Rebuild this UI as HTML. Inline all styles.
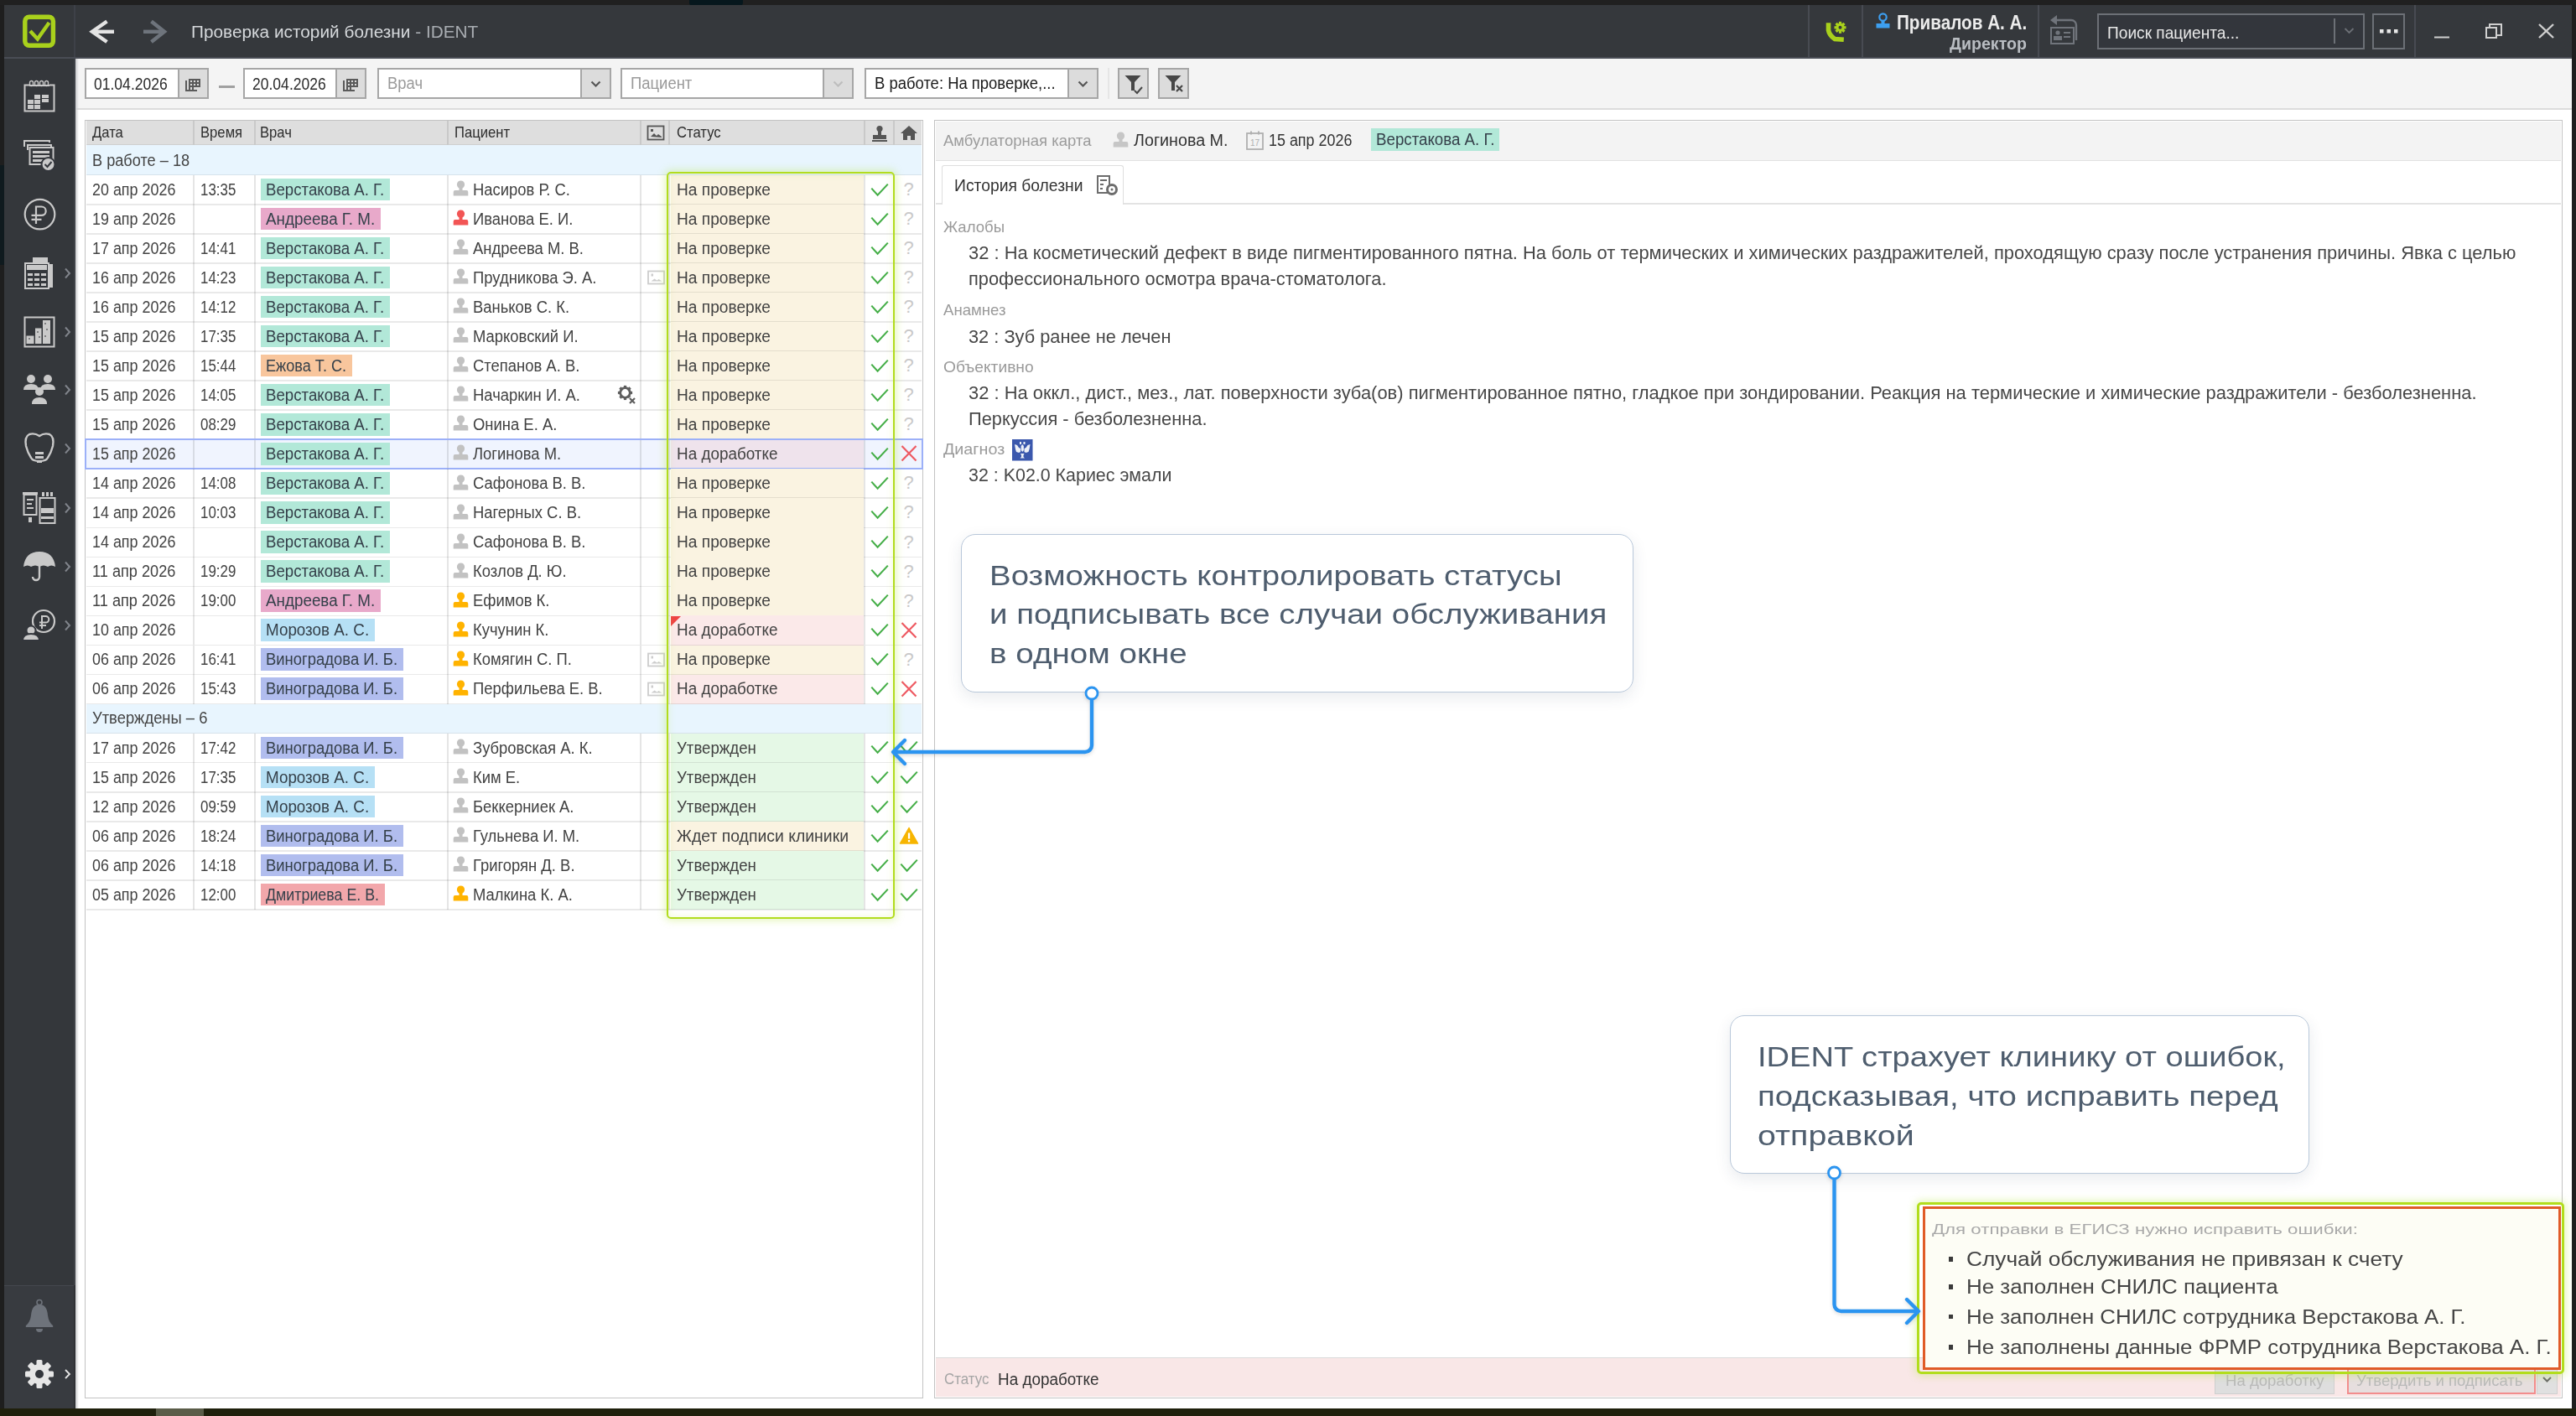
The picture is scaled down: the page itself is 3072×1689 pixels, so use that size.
<!DOCTYPE html>
<html><head><meta charset="utf-8"><style>
*{margin:0;padding:0;box-sizing:border-box}
html,body{width:3072px;height:1689px;overflow:hidden;background:#1d1d1d;font-family:"Liberation Sans", sans-serif}
div{position:absolute}
svg{position:absolute;overflow:visible}
</style></head><body>
<div style="left:0px;top:0px;width:3072px;height:6px;background:#202020"></div><div style="left:822px;top:0px;width:64px;height:6.5px;background:#06171d;border-radius:0 0 4px 4px"></div><div style="left:0px;top:6px;width:5px;height:1683px;background:#1e1e1e"></div><div style="left:0px;top:197px;width:5px;height:119px;background:#0f1a1e"></div><div style="left:3067px;top:6px;width:5px;height:1683px;background:#1e1e1e"></div><div style="left:0px;top:1680px;width:3072px;height:9px;background:#1f200c"></div><div style="left:186px;top:1680px;width:57px;height:9px;background:#5a5c48"></div><div style="left:5px;top:6px;width:3062px;height:62px;background:#35383c"></div><div style="left:5px;top:68px;width:3062px;height:2px;background:#494d55"></div><div style="left:88px;top:6px;width:2px;height:62px;background:#3e4148"></div><svg style="left:0;top:0" width="100" height="70"><rect x="29.8" y="20.2" width="33.6" height="34" rx="5" ry="5" fill="none" stroke="#a9d11c" stroke-width="5.4"/><polyline points="36,37 44.8,46.5 58.6,27" fill="none" stroke="#a9d11c" stroke-width="4.4" stroke-linejoin="miter"/></svg><svg style="left:0;top:0" width="220" height="70"><polyline points="127.5,25.5 110,37.8 127.5,50" fill="none" stroke="#e4e4e4" stroke-width="4.4"/><line x1="110.5" y1="37.8" x2="136" y2="37.8" stroke="#e4e4e4" stroke-width="4.4"/><polyline points="180.5,25.5 196,37.8 180.5,50" fill="none" stroke="#6e747c" stroke-width="4.4"/><line x1="171" y1="37.8" x2="195.5" y2="37.8" stroke="#6e747c" stroke-width="4.4"/></svg><div class="tt" style="left:227.975px;top:24.67px;height:26.65px;line-height:26.65px;font-size:20.5px;color:#d6d9dc;white-space:nowrap;transform:scaleX(1.0150);transform-origin:0 50%;">Проверка историй болезни <span style="color:#a9adb2">- IDENT</span></div><div style="left:2156px;top:6px;width:2px;height:62px;background:#484b52"></div><div style="left:2220px;top:6px;width:2px;height:62px;background:#484b52"></div><div style="left:2430px;top:6px;width:2px;height:62px;background:#484b52"></div><div style="left:2879px;top:6px;width:2px;height:62px;background:#484b52"></div><svg style="left:2170px;top:20px" width="40" height="36"><path d="M10.5,10 V16 Q11.5,22 18,26.5 L26,27" fill="none" stroke="#a9d11c" stroke-width="5.6" stroke-linecap="square"/><g transform="translate(24.5,12.8)" fill="#a9d11c"><rect x="-1.6" y="-7" width="3.2" height="4" transform="rotate(0)"/><rect x="-1.6" y="-7" width="3.2" height="4" transform="rotate(45)"/><rect x="-1.6" y="-7" width="3.2" height="4" transform="rotate(90)"/><rect x="-1.6" y="-7" width="3.2" height="4" transform="rotate(135)"/><rect x="-1.6" y="-7" width="3.2" height="4" transform="rotate(180)"/><rect x="-1.6" y="-7" width="3.2" height="4" transform="rotate(225)"/><rect x="-1.6" y="-7" width="3.2" height="4" transform="rotate(270)"/><rect x="-1.6" y="-7" width="3.2" height="4" transform="rotate(315)"/><circle r="5"/></g><circle cx="24.5" cy="12.8" r="2" fill="#35383c"/></svg><svg style="left:2234px;top:14px" width="24" height="24"><circle cx="11.5" cy="6.5" r="4.2" fill="none" stroke="#3d9ff0" stroke-width="2.2"/><path d="M9.5,10 h4 v4 h6 v5.5 h-16 v-5.5 h6 Z" fill="#3d9ff0"/></svg><div style="left:2261.8px;top:10.70px;height:31.20px;line-height:31.20px;font-size:24px;color:#ececec;white-space:nowrap;font-weight:700;transform:scaleX(0.8621);transform-origin:0 50%;">Привалов А. А.</div><div style="left:2324.95px;top:37.75px;height:27.30px;line-height:27.30px;font-size:21px;color:#b9bdc2;white-space:nowrap;font-weight:700;transform:scaleX(0.9324);transform-origin:0 50%;">Директор</div><svg style="left:2440px;top:14px" width="44" height="44"><rect x="6" y="19" width="27" height="19" fill="none" stroke="#70747b" stroke-width="2"/><circle cx="14" cy="25" r="2.6" fill="#70747b"/><rect x="9" y="29" width="10" height="5" fill="#70747b"/><rect x="21" y="24" width="8" height="2" fill="#70747b"/><rect x="21" y="29" width="8" height="2" fill="#70747b"/><path d="M12,10 h18 a6,6 0 0 1 6,6 v18" fill="none" stroke="#70747b" stroke-width="2.4"/><path d="M5,10 l8,-6 v12 z" fill="#70747b"/></svg><div style="left:2501px;top:15.5px;width:319px;height:43.0px;border:2px solid #6c7076;background:#33363c"></div><div style="left:2783px;top:22px;width:2px;height:30px;background:#6c7076"></div><svg style="left:2790px;top:30px" width="24" height="16"><polyline points="6.5,4 11.5,9 16.5,4" fill="none" stroke="#6c7076" stroke-width="1.8"/></svg><div style="left:2513.45px;top:24.55px;height:27.30px;line-height:27.30px;font-size:21px;color:#e8e8e8;white-space:nowrap;transform:scaleX(0.9113);transform-origin:0 50%;">Поиск пациента...</div><div style="left:2829px;top:15.5px;width:39px;height:43.0px;border:2px solid #6c7076"></div><svg style="left:2829px;top:15px" width="40" height="44"><rect x="9" y="20" width="4.5" height="4.5" fill="#e8e8e8"/><rect x="17.5" y="20" width="4.5" height="4.5" fill="#e8e8e8"/><rect x="26" y="20" width="4.5" height="4.5" fill="#e8e8e8"/></svg><svg style="left:2890px;top:20px" width="170" height="36"><line x1="13" y1="24.5" x2="31" y2="24.5" stroke="#d0d0d0" stroke-width="2"/><rect x="75" y="13" width="12" height="12" fill="none" stroke="#d0d0d0" stroke-width="2"/><path d="M79,13 v-4 h14 v13 h-6" fill="none" stroke="#d0d0d0" stroke-width="2"/><line x1="138" y1="9" x2="155" y2="25" stroke="#d0d0d0" stroke-width="2.4"/><line x1="155" y1="9" x2="138" y2="25" stroke="#d0d0d0" stroke-width="2.4"/></svg><div style="left:5px;top:70px;width:85px;height:1610px;background:#34373b"></div><div style="left:5px;top:1533px;width:85px;height:147px;background:#383b40;border-top:1.5px solid #45484e"></div><div style="left:88px;top:70px;width:2px;height:1463px;background:#3f4247"></div><div style="left:88px;top:1533px;width:2px;height:147px;background:#2f3135"></div><svg style="left:27px;top:95px" width="40" height="40"><path d="M8,6.5 H2.5 V37.5 H37.5 V6.5 H32" fill="none" stroke="#c9c9c9" stroke-width="2"/><g fill="none" stroke="#c9c9c9" stroke-width="1.4"><rect x="8.5" y="1.5" width="4" height="6" rx="2"/><rect x="14.5" y="1.5" width="4" height="6" rx="2"/><rect x="20.5" y="1.5" width="4" height="6" rx="2"/><rect x="26.5" y="1.5" width="4" height="6" rx="2"/></g><rect x="8" y="6" width="24" height="2" fill="#c9c9c9"/><g fill="#c9c9c9"><rect x="6" y="24" width="7" height="5"/><rect x="6" y="30" width="7" height="5"/><rect x="14" y="18" width="7" height="5"/><rect x="14" y="24" width="7" height="5"/><rect x="14" y="30" width="7" height="5"/><rect x="23" y="18" width="8" height="4"/><rect x="23" y="23" width="8" height="4"/></g></svg><svg style="left:27px;top:165px" width="40" height="40"><path d="M2,10 v-7 h30 v2" fill="none" stroke="#c9c9c9" stroke-width="2"/><path d="M6,14 v-6 h28 v2" fill="none" stroke="#c9c9c9" stroke-width="2"/><rect x="8.5" y="11" width="28" height="20" fill="none" stroke="#c9c9c9" stroke-width="2"/><g fill="#c9c9c9"><rect x="12" y="15" width="20" height="3"/><rect x="12" y="20" width="20" height="3"/><rect x="12" y="25" width="12" height="3"/></g><circle cx="30.5" cy="31" r="8" fill="#c9c9c9" stroke="#33363c" stroke-width="2"/><polyline points="26.5,31 29.5,34 34.5,28" fill="none" stroke="#33363c" stroke-width="2"/></svg><svg style="left:27px;top:236px" width="40" height="40"><circle cx="20.5" cy="19.6" r="17.8" fill="none" stroke="#c9c9c9" stroke-width="2.2"/><path d="M16,31 v-20.5 h6.5 a5.2,5.2 0 0 1 0,10.4 h-12 M10.5,25.8 h12" fill="none" stroke="#c9c9c9" stroke-width="2.2"/></svg><svg style="left:27px;top:306px" width="40" height="40"><rect x="12" y="1" width="18" height="6" fill="#c9c9c9"/><rect x="3" y="8" width="28" height="30" fill="none" stroke="#c9c9c9" stroke-width="2"/><rect x="5" y="10" width="24" height="6" fill="#c9c9c9"/><g fill="#c9c9c9"><rect x="6" y="20" width="6" height="3"/><rect x="14" y="20" width="6" height="3"/><rect x="22" y="20" width="6" height="3"/><rect x="6" y="26" width="6" height="3"/><rect x="14" y="26" width="6" height="3"/><rect x="22" y="26" width="6" height="3"/><rect x="6" y="32" width="6" height="3"/><rect x="14" y="32" width="6" height="3"/><rect x="22" y="32" width="6" height="3"/></g><rect x="31" y="9" width="5" height="28" fill="#c9c9c9"/></svg><svg style="left:27px;top:376px" width="40" height="40"><rect x="2.5" y="2.5" width="35" height="35" fill="none" stroke="#c9c9c9" stroke-width="2"/><g fill="#c9c9c9"><rect x="4.5" y="24.5" width="9" height="9.5"/><rect x="15" y="15.5" width="7.5" height="18.5"/><rect x="24" y="6" width="9" height="28"/></g><g fill="#35383c" opacity="0.5"><rect x="7" y="27" width="2" height="2"/><rect x="17" y="19" width="2" height="2"/><rect x="19" y="25" width="2" height="2"/><rect x="26" y="9" width="2" height="2"/><rect x="28" y="16" width="2" height="2"/><rect x="26" y="24" width="2" height="2"/></g></svg><svg style="left:27px;top:445px" width="40" height="40"><g fill="#c9c9c9"><circle cx="10" cy="7" r="5"/><path d="M1,20 q0,-7 9,-7 q9,0 9,7 z"/><circle cx="30" cy="7" r="5"/><path d="M21,20 q0,-7 9,-7 q9,0 9,7 z"/><circle cx="20" cy="22" r="5"/><path d="M11,37 q0,-8 9,-8 q9,0 9,8 z"/></g></svg><svg style="left:27px;top:515px" width="40" height="40"><path d="M8,3 q6,-2 12,2 q6,-4 12,-2 q6,3 4,14 q-2,8 -6,14 q-2,4 -10,4 q-8,0 -10,-4 q-4,-6 -6,-14 q-2,-11 4,-14 z" fill="none" stroke="#c9c9c9" stroke-width="2.4"/><g fill="#c9c9c9"><rect x="15" y="24" width="10" height="3"/><rect x="15" y="29" width="10" height="3"/><rect x="17" y="34" width="6" height="3"/></g></svg><svg style="left:27px;top:586px" width="40" height="40"><rect x="1.5" y="4" width="15" height="24" fill="none" stroke="#c9c9c9" stroke-width="2"/><rect x="0" y="1" width="18" height="3" fill="#c9c9c9"/><g fill="#c9c9c9"><rect x="5" y="9" width="8" height="2"/><rect x="5" y="14" width="6" height="2"/><rect x="5" y="19" width="8" height="2"/><rect x="7" y="31" width="4" height="6"/></g><rect x="20.5" y="8" width="18" height="30" fill="none" stroke="#c9c9c9" stroke-width="2"/><g fill="#c9c9c9"><rect x="23" y="1" width="3" height="5"/><rect x="28" y="1" width="3" height="5"/><rect x="33" y="1" width="3" height="5"/><rect x="22" y="20" width="15" height="6"/><rect x="22" y="30" width="15" height="3"/></g></svg><svg style="left:27px;top:656px" width="40" height="40"><path d="M1,20 q2,-18 19,-18 q17,0 19,18 q-5,-3 -9,0 q-5,-3 -10,0 q-5,-3 -10,0 q-4,-3 -9,0 z" fill="#c9c9c9"/><path d="M20,18 v14 a4,4 0 0 1 -8,0" fill="none" stroke="#c9c9c9" stroke-width="2.4"/></svg><svg style="left:27px;top:726px" width="40" height="40"><circle cx="25" cy="15" r="13" fill="none" stroke="#c9c9c9" stroke-width="2.2"/><path d="M23,24 v-15 h4.5 a3.8,3.8 0 0 1 0,7.6 h-7.5 M20,20 h8" fill="none" stroke="#c9c9c9" stroke-width="2"/><g fill="#c9c9c9" stroke="#33363c" stroke-width="2"><circle cx="10" cy="26" r="5.5"/><path d="M0,38 q0,-8 10,-8 q10,0 10,8 z"/></g></svg><svg style="left:74px;top:318px" width="14" height="16"><polyline points="4,2.5 9,8 4,13.5" fill="none" stroke="#80848b" stroke-width="2"/></svg><svg style="left:74px;top:388px" width="14" height="16"><polyline points="4,2.5 9,8 4,13.5" fill="none" stroke="#80848b" stroke-width="2"/></svg><svg style="left:74px;top:457px" width="14" height="16"><polyline points="4,2.5 9,8 4,13.5" fill="none" stroke="#80848b" stroke-width="2"/></svg><svg style="left:74px;top:527px" width="14" height="16"><polyline points="4,2.5 9,8 4,13.5" fill="none" stroke="#80848b" stroke-width="2"/></svg><svg style="left:74px;top:598px" width="14" height="16"><polyline points="4,2.5 9,8 4,13.5" fill="none" stroke="#80848b" stroke-width="2"/></svg><svg style="left:74px;top:668px" width="14" height="16"><polyline points="4,2.5 9,8 4,13.5" fill="none" stroke="#80848b" stroke-width="2"/></svg><svg style="left:74px;top:738px" width="14" height="16"><polyline points="4,2.5 9,8 4,13.5" fill="none" stroke="#80848b" stroke-width="2"/></svg><svg style="left:27px;top:1548px" width="40" height="42"><circle cx="20" cy="5.5" r="3" fill="none" stroke="#6e737b" stroke-width="1.6"/><path d="M20,8 q-9,0 -10,13 q-1,8 -6,12 q-1,2 1,2 h30 q2,0 1,-2 q-5,-4 -6,-12 q-1,-13 -10,-13 z" fill="#6e737b"/><path d="M16,37 a4,4 0 0 0 8,0 z" fill="#6e737b"/></svg><svg style="left:27px;top:1619px" width="40" height="40"><g transform="translate(20,20)" fill="#e6e6e6"><rect x="-3.5" y="-17" width="7" height="8" rx="1.5" transform="rotate(0)"/><rect x="-3.5" y="-17" width="7" height="8" rx="1.5" transform="rotate(45)"/><rect x="-3.5" y="-17" width="7" height="8" rx="1.5" transform="rotate(90)"/><rect x="-3.5" y="-17" width="7" height="8" rx="1.5" transform="rotate(135)"/><rect x="-3.5" y="-17" width="7" height="8" rx="1.5" transform="rotate(180)"/><rect x="-3.5" y="-17" width="7" height="8" rx="1.5" transform="rotate(225)"/><rect x="-3.5" y="-17" width="7" height="8" rx="1.5" transform="rotate(270)"/><rect x="-3.5" y="-17" width="7" height="8" rx="1.5" transform="rotate(315)"/><circle r="12"/></g><circle cx="20" cy="20" r="5" fill="#33363c"/></svg><svg style="left:74px;top:1631px" width="14" height="16"><polyline points="4,3 9,8 4,13" fill="none" stroke="#e6e6e6" stroke-width="1.8"/></svg><div style="left:90px;top:70px;width:2977px;height:1610px;background:#ffffff"></div><div style="left:90px;top:70px;width:2977px;height:59px;background:#f4f4f4"></div><div style="left:90px;top:129px;width:2977px;height:2px;background:#dcdcdc"></div><div style="left:90px;top:70px;width:4px;height:1610px;background:linear-gradient(90deg,#c9cacc,rgba(255,255,255,0))"></div><div style="left:101px;top:81px;width:148px;height:37px;background:#fff;border:2px solid #a6a6a6"></div><div style="left:212px;top:81px;width:37px;height:37px;background:#dcdcdc;border:2px solid #a6a6a6"></div><svg style="left:212px;top:81px" width="36" height="37"><g fill="#5a5a5a"><rect x="9" y="15" width="2" height="12"/><rect x="13" y="13" width="2" height="14"/><rect x="17" y="13" width="2" height="14"/><rect x="21" y="13" width="2" height="10"/><rect x="9" y="26" width="14" height="2"/><rect x="13" y="13" width="14" height="2"/><rect x="13" y="17" width="14" height="2"/><rect x="13" y="21" width="14" height="2"/><rect x="25" y="13" width="2" height="10"/></g></svg><div style="left:111.95px;top:85.75px;height:27.30px;line-height:27.30px;font-size:21px;color:#2a2a2a;white-space:nowrap;transform:scaleX(0.8349);transform-origin:0 50%;">01.04.2026</div><div style="left:261px;top:102px;width:19px;height:3px;background:#a0a0a0"></div><div style="left:290px;top:81px;width:147px;height:37px;background:#fff;border:2px solid #a6a6a6"></div><div style="left:400px;top:81px;width:37px;height:37px;background:#dcdcdc;border:2px solid #a6a6a6"></div><svg style="left:400px;top:81px" width="36" height="37"><g fill="#5a5a5a"><rect x="9" y="15" width="2" height="12"/><rect x="13" y="13" width="2" height="14"/><rect x="17" y="13" width="2" height="14"/><rect x="21" y="13" width="2" height="10"/><rect x="9" y="26" width="14" height="2"/><rect x="13" y="13" width="14" height="2"/><rect x="13" y="17" width="14" height="2"/><rect x="13" y="21" width="14" height="2"/><rect x="25" y="13" width="2" height="10"/></g></svg><div style="left:300.95px;top:85.75px;height:27.30px;line-height:27.30px;font-size:21px;color:#2a2a2a;white-space:nowrap;transform:scaleX(0.8349);transform-origin:0 50%;">20.04.2026</div><div style="left:450px;top:81px;width:279px;height:37px;background:#fff;border:2px solid #a6a6a6"></div><div style="left:692px;top:81px;width:37px;height:37px;background:#dcdcdc;border:2px solid #a6a6a6"></div><svg style="left:692px;top:81px" width="37" height="37"><polyline points="13.5,16.5 18.5,21.5 23.5,16.5" fill="none" stroke="#555" stroke-width="2.2"/></svg><div style="left:461.975px;top:86.08px;height:26.65px;line-height:26.65px;font-size:20.5px;color:#9a9a9a;white-space:nowrap;transform:scaleX(0.9000);transform-origin:0 50%;">Врач</div><div style="left:740px;top:81px;width:278px;height:37px;background:#fff;border:2px solid #a6a6a6"></div><div style="left:981px;top:81px;width:37px;height:37px;background:#dcdcdc;border:2px solid #a6a6a6"></div><svg style="left:981px;top:81px" width="37" height="37"><polyline points="13.5,16.5 18.5,21.5 23.5,16.5" fill="none" stroke="#bdbdbd" stroke-width="2.2"/></svg><div style="left:751.975px;top:86.08px;height:26.65px;line-height:26.65px;font-size:20.5px;color:#9a9a9a;white-space:nowrap;transform:scaleX(0.9000);transform-origin:0 50%;">Пациент</div><div style="left:1031px;top:81px;width:279px;height:37px;background:#fff;border:2px solid #a6a6a6"></div><div style="left:1273px;top:81px;width:37px;height:37px;background:#dcdcdc;border:2px solid #a6a6a6"></div><svg style="left:1273px;top:81px" width="37" height="37"><polyline points="13.5,16.5 18.5,21.5 23.5,16.5" fill="none" stroke="#555" stroke-width="2.2"/></svg><div style="left:1042.975px;top:86.08px;height:26.65px;line-height:26.65px;font-size:20.5px;color:#1a1a1a;white-space:nowrap;transform:scaleX(0.9000);transform-origin:0 50%;">В работе: На проверке,...</div><div style="left:1321px;top:81px;width:2px;height:37px;background:#e6e6e6"></div><div style="left:1333px;top:81px;width:37px;height:37px;background:#dcdcdc;border:2px solid #a6a6a6"></div><svg style="left:1333px;top:81px" width="37" height="37"><path d="M8.5,9 h19 l-7.5,8 v10 h-4 v-10 z" fill="#474747"/><polyline points="20,27 23,30 29,23" fill="none" stroke="#474747" stroke-width="2"/></svg><div style="left:1381px;top:81px;width:37px;height:37px;background:#dcdcdc;border:2px solid #a6a6a6"></div><svg style="left:1381px;top:81px" width="37" height="37"><path d="M8.5,9 h19 l-7.5,8 v10 h-4 v-10 z" fill="#474747"/><path d="M22,21 l7,7 M29,21 l-7,7" stroke="#474747" stroke-width="2.2"/></svg><div style="left:101px;top:142.5px;width:1000px;height:1525.5px;background:#fff;border:1.6px solid #c3c3c3"></div><div style="left:102.6px;top:144.1px;width:996.8000000000001px;height:29.400000000000006px;background:#dedede"></div><div style="left:102.6px;top:171.9px;width:996.8000000000001px;height:1.5999999999999943px;background:#cfcfcf"></div><div style="left:230.2px;top:144.1px;width:1.6000000000000227px;height:29.400000000000006px;background:#c9c9c9"></div><div style="left:303.2px;top:144.1px;width:1.6000000000000227px;height:29.400000000000006px;background:#c9c9c9"></div><div style="left:533.2px;top:144.1px;width:1.599999999999909px;height:29.400000000000006px;background:#c9c9c9"></div><div style="left:763.2px;top:144.1px;width:1.599999999999909px;height:29.400000000000006px;background:#c9c9c9"></div><div style="left:797.2px;top:144.1px;width:1.599999999999909px;height:29.400000000000006px;background:#c9c9c9"></div><div style="left:1030.2px;top:144.1px;width:1.599999999999909px;height:29.400000000000006px;background:#c9c9c9"></div><div style="left:1065.2px;top:144.1px;width:1.599999999999909px;height:29.400000000000006px;background:#c9c9c9"></div><div style="left:109.775px;top:145.97px;height:24.05px;line-height:24.05px;font-size:18.5px;color:#2e2e2e;white-space:nowrap;transform:scaleX(0.9000);transform-origin:0 50%;">Дата</div><div style="left:239.075px;top:145.97px;height:24.05px;line-height:24.05px;font-size:18.5px;color:#2e2e2e;white-space:nowrap;transform:scaleX(0.9000);transform-origin:0 50%;">Время</div><div style="left:309.775px;top:145.97px;height:24.05px;line-height:24.05px;font-size:18.5px;color:#2e2e2e;white-space:nowrap;transform:scaleX(0.9000);transform-origin:0 50%;">Врач</div><div style="left:542.075px;top:145.97px;height:24.05px;line-height:24.05px;font-size:18.5px;color:#2e2e2e;white-space:nowrap;transform:scaleX(0.9000);transform-origin:0 50%;">Пациент</div><div style="left:807.075px;top:145.97px;height:24.05px;line-height:24.05px;font-size:18.5px;color:#2e2e2e;white-space:nowrap;transform:scaleX(0.9000);transform-origin:0 50%;">Статус</div><svg style="left:770px;top:148px" width="26" height="22"><rect x="2.5" y="2.5" width="19" height="16" fill="none" stroke="#555" stroke-width="1.8"/><rect x="6" y="6" width="3" height="3" fill="#555"/><path d="M6,15 l4,-4 l3,3 l2,-2 l4,3 v1 z" fill="#555"/></svg><svg style="left:1038px;top:148px" width="24" height="24"><circle cx="11" cy="5.5" r="3.6" fill="#555"/><path d="M9,8 h4 v5 h6 v5 h-16 v-5 h6 z" fill="#555"/><rect x="2" y="19" width="18" height="2" fill="#555"/></svg><svg style="left:1072px;top:148px" width="26" height="24"><path d="M12,2 l10,9 h-3 v8 h-5 v-5 h-4 v5 h-5 v-8 h-3 z" fill="#555"/></svg><div style="left:102.6px;top:172.75px;width:996.8000000000001px;height:36.44999999999999px;background:#e8f5fe"></div><div style="left:102.6px;top:207.89999999999998px;width:996.8000000000001px;height:1.6000000000000227px;background:rgba(0,0,0,0.075)"></div><div style="left:109.72500000000001px;top:178.50px;height:25.35px;line-height:25.35px;font-size:19.5px;color:#444;white-space:nowrap;transform:scaleX(0.9315);transform-origin:0 50%;">В работе – 18</div><div style="left:799.6px;top:208.7px;width:230.60000000000002px;height:35.55000000000001px;background:#faf3e1"></div><div style="left:102.6px;top:242.95px;width:996.8000000000001px;height:1.6000000000000227px;background:rgba(0,0,0,0.085)"></div><div style="left:230.2px;top:208.7px;width:1.6000000000000227px;height:35.05000000000001px;background:rgba(0,0,0,0.1)"></div><div style="left:303.2px;top:208.7px;width:1.6000000000000227px;height:35.05000000000001px;background:rgba(0,0,0,0.1)"></div><div style="left:533.2px;top:208.7px;width:1.599999999999909px;height:35.05000000000001px;background:rgba(0,0,0,0.1)"></div><div style="left:763.2px;top:208.7px;width:1.599999999999909px;height:35.05000000000001px;background:rgba(0,0,0,0.1)"></div><div style="left:797.2px;top:208.7px;width:1.599999999999909px;height:35.05000000000001px;background:rgba(0,0,0,0.1)"></div><div style="left:1030.2px;top:208.7px;width:1.599999999999909px;height:35.05000000000001px;background:rgba(0,0,0,0.1)"></div><div style="left:1065.2px;top:208.7px;width:1.599999999999909px;height:35.05000000000001px;background:rgba(0,0,0,0.1)"></div><div style="left:109.72500000000001px;top:213.55px;height:25.35px;line-height:25.35px;font-size:19.5px;color:#424242;white-space:nowrap;transform:scaleX(0.9188);transform-origin:0 50%;">20 апр 2026</div><div style="left:239.025px;top:213.55px;height:25.35px;line-height:25.35px;font-size:19.5px;color:#424242;white-space:nowrap;transform:scaleX(0.8666);transform-origin:0 50%;">13:35</div><div style="left:311px;top:212.6px;width:154px;height:26.5px;background:#b2e8d8"></div><div style="left:316.92499999999995px;top:213.55px;height:25.35px;line-height:25.35px;font-size:19.5px;color:#35404a;white-space:nowrap;transform:scaleX(0.9572);transform-origin:0 50%;">Верстакова А. Г.</div><svg style="left:539.5px;top:213.025px" width="20" height="24"><path d="M9.5,2.5 c2.8,0 4.6,2 4.6,4.6 c0,2.4 -1.2,3.6 -2.6,4.4 v2.6 h4.8 a2,2 0 0 1 2,2 v4.5 h-17.6 v-4.5 a2,2 0 0 1 2,-2 h4.8 v-2.6 c-1.4,-0.8 -2.6,-2 -2.6,-4.4 c0,-2.6 1.8,-4.6 4.6,-4.6 z" fill="#c2c2c2"/></svg><div style="left:563.725px;top:213.55px;height:25.35px;line-height:25.35px;font-size:19.5px;color:#424242;white-space:nowrap;transform:scaleX(0.9450);transform-origin:0 50%;">Насиров Р. С.</div><div style="left:807.025px;top:213.55px;height:25.35px;line-height:25.35px;font-size:19.5px;color:#424242;white-space:nowrap;transform:scaleX(0.9819);transform-origin:0 50%;">На проверке</div><svg style="left:1037px;top:214.525px" width="24" height="24"><polyline points="2.3,9.6 9.6,17.8 21.8,4.6" fill="none" stroke="#45ae47" stroke-width="2.1"/></svg><div style="left:1077.4px;top:211.92px;height:28.60px;line-height:28.60px;font-size:22px;color:#c9c9c9;white-space:nowrap;">?</div><div style="left:799.6px;top:243.75px;width:230.60000000000002px;height:35.55000000000001px;background:#faf3e1"></div><div style="left:102.6px;top:278.0px;width:996.8000000000001px;height:1.6000000000000227px;background:rgba(0,0,0,0.085)"></div><div style="left:230.2px;top:243.75px;width:1.6000000000000227px;height:35.05000000000001px;background:rgba(0,0,0,0.1)"></div><div style="left:303.2px;top:243.75px;width:1.6000000000000227px;height:35.05000000000001px;background:rgba(0,0,0,0.1)"></div><div style="left:533.2px;top:243.75px;width:1.599999999999909px;height:35.05000000000001px;background:rgba(0,0,0,0.1)"></div><div style="left:763.2px;top:243.75px;width:1.599999999999909px;height:35.05000000000001px;background:rgba(0,0,0,0.1)"></div><div style="left:797.2px;top:243.75px;width:1.599999999999909px;height:35.05000000000001px;background:rgba(0,0,0,0.1)"></div><div style="left:1030.2px;top:243.75px;width:1.599999999999909px;height:35.05000000000001px;background:rgba(0,0,0,0.1)"></div><div style="left:1065.2px;top:243.75px;width:1.599999999999909px;height:35.05000000000001px;background:rgba(0,0,0,0.1)"></div><div style="left:109.72500000000001px;top:248.60px;height:25.35px;line-height:25.35px;font-size:19.5px;color:#424242;white-space:nowrap;transform:scaleX(0.9188);transform-origin:0 50%;">19 апр 2026</div><div style="left:311px;top:247.65px;width:143px;height:26.49999999999997px;background:#e8a9ca"></div><div style="left:316.92499999999995px;top:248.60px;height:25.35px;line-height:25.35px;font-size:19.5px;color:#35404a;white-space:nowrap;transform:scaleX(0.9656);transform-origin:0 50%;">Андреева Г. М.</div><svg style="left:539.5px;top:248.075px" width="20" height="24"><path d="M9.5,2.5 c2.8,0 4.6,2 4.6,4.6 c0,2.4 -1.2,3.6 -2.6,4.4 v2.6 h4.8 a2,2 0 0 1 2,2 v4.5 h-17.6 v-4.5 a2,2 0 0 1 2,-2 h4.8 v-2.6 c-1.4,-0.8 -2.6,-2 -2.6,-4.4 c0,-2.6 1.8,-4.6 4.6,-4.6 z" fill="#f25555"/></svg><div style="left:563.725px;top:248.60px;height:25.35px;line-height:25.35px;font-size:19.5px;color:#424242;white-space:nowrap;transform:scaleX(0.9450);transform-origin:0 50%;">Иванова Е. И.</div><div style="left:807.025px;top:248.60px;height:25.35px;line-height:25.35px;font-size:19.5px;color:#424242;white-space:nowrap;transform:scaleX(0.9819);transform-origin:0 50%;">На проверке</div><svg style="left:1037px;top:249.575px" width="24" height="24"><polyline points="2.3,9.6 9.6,17.8 21.8,4.6" fill="none" stroke="#45ae47" stroke-width="2.1"/></svg><div style="left:1077.4px;top:246.97px;height:28.60px;line-height:28.60px;font-size:22px;color:#c9c9c9;white-space:nowrap;">?</div><div style="left:799.6px;top:278.8px;width:230.60000000000002px;height:35.55000000000001px;background:#faf3e1"></div><div style="left:102.6px;top:313.05px;width:996.8000000000001px;height:1.6000000000000227px;background:rgba(0,0,0,0.085)"></div><div style="left:230.2px;top:278.8px;width:1.6000000000000227px;height:35.05000000000001px;background:rgba(0,0,0,0.1)"></div><div style="left:303.2px;top:278.8px;width:1.6000000000000227px;height:35.05000000000001px;background:rgba(0,0,0,0.1)"></div><div style="left:533.2px;top:278.8px;width:1.599999999999909px;height:35.05000000000001px;background:rgba(0,0,0,0.1)"></div><div style="left:763.2px;top:278.8px;width:1.599999999999909px;height:35.05000000000001px;background:rgba(0,0,0,0.1)"></div><div style="left:797.2px;top:278.8px;width:1.599999999999909px;height:35.05000000000001px;background:rgba(0,0,0,0.1)"></div><div style="left:1030.2px;top:278.8px;width:1.599999999999909px;height:35.05000000000001px;background:rgba(0,0,0,0.1)"></div><div style="left:1065.2px;top:278.8px;width:1.599999999999909px;height:35.05000000000001px;background:rgba(0,0,0,0.1)"></div><div style="left:109.72500000000001px;top:283.65px;height:25.35px;line-height:25.35px;font-size:19.5px;color:#424242;white-space:nowrap;transform:scaleX(0.9188);transform-origin:0 50%;">17 апр 2026</div><div style="left:239.025px;top:283.65px;height:25.35px;line-height:25.35px;font-size:19.5px;color:#424242;white-space:nowrap;transform:scaleX(0.8666);transform-origin:0 50%;">14:41</div><div style="left:311px;top:282.7px;width:154px;height:26.5px;background:#b2e8d8"></div><div style="left:316.92499999999995px;top:283.65px;height:25.35px;line-height:25.35px;font-size:19.5px;color:#35404a;white-space:nowrap;transform:scaleX(0.9572);transform-origin:0 50%;">Верстакова А. Г.</div><svg style="left:539.5px;top:283.125px" width="20" height="24"><path d="M9.5,2.5 c2.8,0 4.6,2 4.6,4.6 c0,2.4 -1.2,3.6 -2.6,4.4 v2.6 h4.8 a2,2 0 0 1 2,2 v4.5 h-17.6 v-4.5 a2,2 0 0 1 2,-2 h4.8 v-2.6 c-1.4,-0.8 -2.6,-2 -2.6,-4.4 c0,-2.6 1.8,-4.6 4.6,-4.6 z" fill="#c2c2c2"/></svg><div style="left:563.725px;top:283.65px;height:25.35px;line-height:25.35px;font-size:19.5px;color:#424242;white-space:nowrap;transform:scaleX(0.9450);transform-origin:0 50%;">Андреева М. В.</div><div style="left:807.025px;top:283.65px;height:25.35px;line-height:25.35px;font-size:19.5px;color:#424242;white-space:nowrap;transform:scaleX(0.9819);transform-origin:0 50%;">На проверке</div><svg style="left:1037px;top:284.625px" width="24" height="24"><polyline points="2.3,9.6 9.6,17.8 21.8,4.6" fill="none" stroke="#45ae47" stroke-width="2.1"/></svg><div style="left:1077.4px;top:282.02px;height:28.60px;line-height:28.60px;font-size:22px;color:#c9c9c9;white-space:nowrap;">?</div><div style="left:799.6px;top:313.85px;width:230.60000000000002px;height:35.55000000000001px;background:#faf3e1"></div><div style="left:102.6px;top:348.1px;width:996.8000000000001px;height:1.6000000000000227px;background:rgba(0,0,0,0.085)"></div><div style="left:230.2px;top:313.85px;width:1.6000000000000227px;height:35.05000000000001px;background:rgba(0,0,0,0.1)"></div><div style="left:303.2px;top:313.85px;width:1.6000000000000227px;height:35.05000000000001px;background:rgba(0,0,0,0.1)"></div><div style="left:533.2px;top:313.85px;width:1.599999999999909px;height:35.05000000000001px;background:rgba(0,0,0,0.1)"></div><div style="left:763.2px;top:313.85px;width:1.599999999999909px;height:35.05000000000001px;background:rgba(0,0,0,0.1)"></div><div style="left:797.2px;top:313.85px;width:1.599999999999909px;height:35.05000000000001px;background:rgba(0,0,0,0.1)"></div><div style="left:1030.2px;top:313.85px;width:1.599999999999909px;height:35.05000000000001px;background:rgba(0,0,0,0.1)"></div><div style="left:1065.2px;top:313.85px;width:1.599999999999909px;height:35.05000000000001px;background:rgba(0,0,0,0.1)"></div><div style="left:109.72500000000001px;top:318.70px;height:25.35px;line-height:25.35px;font-size:19.5px;color:#424242;white-space:nowrap;transform:scaleX(0.9188);transform-origin:0 50%;">16 апр 2026</div><div style="left:239.025px;top:318.70px;height:25.35px;line-height:25.35px;font-size:19.5px;color:#424242;white-space:nowrap;transform:scaleX(0.8666);transform-origin:0 50%;">14:23</div><div style="left:311px;top:317.75px;width:154px;height:26.5px;background:#b2e8d8"></div><div style="left:316.92499999999995px;top:318.70px;height:25.35px;line-height:25.35px;font-size:19.5px;color:#35404a;white-space:nowrap;transform:scaleX(0.9572);transform-origin:0 50%;">Верстакова А. Г.</div><svg style="left:539.5px;top:318.175px" width="20" height="24"><path d="M9.5,2.5 c2.8,0 4.6,2 4.6,4.6 c0,2.4 -1.2,3.6 -2.6,4.4 v2.6 h4.8 a2,2 0 0 1 2,2 v4.5 h-17.6 v-4.5 a2,2 0 0 1 2,-2 h4.8 v-2.6 c-1.4,-0.8 -2.6,-2 -2.6,-4.4 c0,-2.6 1.8,-4.6 4.6,-4.6 z" fill="#c2c2c2"/></svg><div style="left:563.725px;top:318.70px;height:25.35px;line-height:25.35px;font-size:19.5px;color:#424242;white-space:nowrap;transform:scaleX(0.9450);transform-origin:0 50%;">Прудникова Э. А.</div><svg style="left:771.5px;top:321.375px" width="22" height="20"><rect x="1" y="2.5" width="19" height="15" fill="none" stroke="#cdcdcd" stroke-width="1.8"/><rect x="4.5" y="5.5" width="2.5" height="3" fill="#cdcdcd"/><path d="M4.5,14.5 l4,-3 l3,2 l2,-1.5 l4,2.5 z" fill="#cdcdcd"/></svg><div style="left:807.025px;top:318.70px;height:25.35px;line-height:25.35px;font-size:19.5px;color:#424242;white-space:nowrap;transform:scaleX(0.9819);transform-origin:0 50%;">На проверке</div><svg style="left:1037px;top:319.675px" width="24" height="24"><polyline points="2.3,9.6 9.6,17.8 21.8,4.6" fill="none" stroke="#45ae47" stroke-width="2.1"/></svg><div style="left:1077.4px;top:317.07px;height:28.60px;line-height:28.60px;font-size:22px;color:#c9c9c9;white-space:nowrap;">?</div><div style="left:799.6px;top:348.9px;width:230.60000000000002px;height:35.55000000000001px;background:#faf3e1"></div><div style="left:102.6px;top:383.15px;width:996.8000000000001px;height:1.6000000000000227px;background:rgba(0,0,0,0.085)"></div><div style="left:230.2px;top:348.9px;width:1.6000000000000227px;height:35.05000000000001px;background:rgba(0,0,0,0.1)"></div><div style="left:303.2px;top:348.9px;width:1.6000000000000227px;height:35.05000000000001px;background:rgba(0,0,0,0.1)"></div><div style="left:533.2px;top:348.9px;width:1.599999999999909px;height:35.05000000000001px;background:rgba(0,0,0,0.1)"></div><div style="left:763.2px;top:348.9px;width:1.599999999999909px;height:35.05000000000001px;background:rgba(0,0,0,0.1)"></div><div style="left:797.2px;top:348.9px;width:1.599999999999909px;height:35.05000000000001px;background:rgba(0,0,0,0.1)"></div><div style="left:1030.2px;top:348.9px;width:1.599999999999909px;height:35.05000000000001px;background:rgba(0,0,0,0.1)"></div><div style="left:1065.2px;top:348.9px;width:1.599999999999909px;height:35.05000000000001px;background:rgba(0,0,0,0.1)"></div><div style="left:109.72500000000001px;top:353.75px;height:25.35px;line-height:25.35px;font-size:19.5px;color:#424242;white-space:nowrap;transform:scaleX(0.9188);transform-origin:0 50%;">16 апр 2026</div><div style="left:239.025px;top:353.75px;height:25.35px;line-height:25.35px;font-size:19.5px;color:#424242;white-space:nowrap;transform:scaleX(0.8666);transform-origin:0 50%;">14:12</div><div style="left:311px;top:352.79999999999995px;width:154px;height:26.5px;background:#b2e8d8"></div><div style="left:316.92499999999995px;top:353.75px;height:25.35px;line-height:25.35px;font-size:19.5px;color:#35404a;white-space:nowrap;transform:scaleX(0.9572);transform-origin:0 50%;">Верстакова А. Г.</div><svg style="left:539.5px;top:353.22499999999997px" width="20" height="24"><path d="M9.5,2.5 c2.8,0 4.6,2 4.6,4.6 c0,2.4 -1.2,3.6 -2.6,4.4 v2.6 h4.8 a2,2 0 0 1 2,2 v4.5 h-17.6 v-4.5 a2,2 0 0 1 2,-2 h4.8 v-2.6 c-1.4,-0.8 -2.6,-2 -2.6,-4.4 c0,-2.6 1.8,-4.6 4.6,-4.6 z" fill="#c2c2c2"/></svg><div style="left:563.725px;top:353.75px;height:25.35px;line-height:25.35px;font-size:19.5px;color:#424242;white-space:nowrap;transform:scaleX(0.9450);transform-origin:0 50%;">Ваньков С. К.</div><div style="left:807.025px;top:353.75px;height:25.35px;line-height:25.35px;font-size:19.5px;color:#424242;white-space:nowrap;transform:scaleX(0.9819);transform-origin:0 50%;">На проверке</div><svg style="left:1037px;top:354.72499999999997px" width="24" height="24"><polyline points="2.3,9.6 9.6,17.8 21.8,4.6" fill="none" stroke="#45ae47" stroke-width="2.1"/></svg><div style="left:1077.4px;top:352.12px;height:28.60px;line-height:28.60px;font-size:22px;color:#c9c9c9;white-space:nowrap;">?</div><div style="left:799.6px;top:383.95px;width:230.60000000000002px;height:35.55000000000001px;background:#faf3e1"></div><div style="left:102.6px;top:418.2px;width:996.8000000000001px;height:1.6000000000000227px;background:rgba(0,0,0,0.085)"></div><div style="left:230.2px;top:383.95px;width:1.6000000000000227px;height:35.05000000000001px;background:rgba(0,0,0,0.1)"></div><div style="left:303.2px;top:383.95px;width:1.6000000000000227px;height:35.05000000000001px;background:rgba(0,0,0,0.1)"></div><div style="left:533.2px;top:383.95px;width:1.599999999999909px;height:35.05000000000001px;background:rgba(0,0,0,0.1)"></div><div style="left:763.2px;top:383.95px;width:1.599999999999909px;height:35.05000000000001px;background:rgba(0,0,0,0.1)"></div><div style="left:797.2px;top:383.95px;width:1.599999999999909px;height:35.05000000000001px;background:rgba(0,0,0,0.1)"></div><div style="left:1030.2px;top:383.95px;width:1.599999999999909px;height:35.05000000000001px;background:rgba(0,0,0,0.1)"></div><div style="left:1065.2px;top:383.95px;width:1.599999999999909px;height:35.05000000000001px;background:rgba(0,0,0,0.1)"></div><div style="left:109.72500000000001px;top:388.80px;height:25.35px;line-height:25.35px;font-size:19.5px;color:#424242;white-space:nowrap;transform:scaleX(0.9188);transform-origin:0 50%;">15 апр 2026</div><div style="left:239.025px;top:388.80px;height:25.35px;line-height:25.35px;font-size:19.5px;color:#424242;white-space:nowrap;transform:scaleX(0.8666);transform-origin:0 50%;">17:35</div><div style="left:311px;top:387.84999999999997px;width:154px;height:26.5px;background:#b2e8d8"></div><div style="left:316.92499999999995px;top:388.80px;height:25.35px;line-height:25.35px;font-size:19.5px;color:#35404a;white-space:nowrap;transform:scaleX(0.9572);transform-origin:0 50%;">Верстакова А. Г.</div><svg style="left:539.5px;top:388.275px" width="20" height="24"><path d="M9.5,2.5 c2.8,0 4.6,2 4.6,4.6 c0,2.4 -1.2,3.6 -2.6,4.4 v2.6 h4.8 a2,2 0 0 1 2,2 v4.5 h-17.6 v-4.5 a2,2 0 0 1 2,-2 h4.8 v-2.6 c-1.4,-0.8 -2.6,-2 -2.6,-4.4 c0,-2.6 1.8,-4.6 4.6,-4.6 z" fill="#c2c2c2"/></svg><div style="left:563.725px;top:388.80px;height:25.35px;line-height:25.35px;font-size:19.5px;color:#424242;white-space:nowrap;transform:scaleX(0.9450);transform-origin:0 50%;">Марковский И.</div><div style="left:807.025px;top:388.80px;height:25.35px;line-height:25.35px;font-size:19.5px;color:#424242;white-space:nowrap;transform:scaleX(0.9819);transform-origin:0 50%;">На проверке</div><svg style="left:1037px;top:389.775px" width="24" height="24"><polyline points="2.3,9.6 9.6,17.8 21.8,4.6" fill="none" stroke="#45ae47" stroke-width="2.1"/></svg><div style="left:1077.4px;top:387.17px;height:28.60px;line-height:28.60px;font-size:22px;color:#c9c9c9;white-space:nowrap;">?</div><div style="left:799.6px;top:419.0px;width:230.60000000000002px;height:35.55000000000001px;background:#faf3e1"></div><div style="left:102.6px;top:453.25px;width:996.8000000000001px;height:1.6000000000000227px;background:rgba(0,0,0,0.085)"></div><div style="left:230.2px;top:419.0px;width:1.6000000000000227px;height:35.05000000000001px;background:rgba(0,0,0,0.1)"></div><div style="left:303.2px;top:419.0px;width:1.6000000000000227px;height:35.05000000000001px;background:rgba(0,0,0,0.1)"></div><div style="left:533.2px;top:419.0px;width:1.599999999999909px;height:35.05000000000001px;background:rgba(0,0,0,0.1)"></div><div style="left:763.2px;top:419.0px;width:1.599999999999909px;height:35.05000000000001px;background:rgba(0,0,0,0.1)"></div><div style="left:797.2px;top:419.0px;width:1.599999999999909px;height:35.05000000000001px;background:rgba(0,0,0,0.1)"></div><div style="left:1030.2px;top:419.0px;width:1.599999999999909px;height:35.05000000000001px;background:rgba(0,0,0,0.1)"></div><div style="left:1065.2px;top:419.0px;width:1.599999999999909px;height:35.05000000000001px;background:rgba(0,0,0,0.1)"></div><div style="left:109.72500000000001px;top:423.85px;height:25.35px;line-height:25.35px;font-size:19.5px;color:#424242;white-space:nowrap;transform:scaleX(0.9188);transform-origin:0 50%;">15 апр 2026</div><div style="left:239.025px;top:423.85px;height:25.35px;line-height:25.35px;font-size:19.5px;color:#424242;white-space:nowrap;transform:scaleX(0.8666);transform-origin:0 50%;">15:44</div><div style="left:311px;top:422.9px;width:109px;height:26.5px;background:#f8c69d"></div><div style="left:316.92499999999995px;top:423.85px;height:25.35px;line-height:25.35px;font-size:19.5px;color:#35404a;white-space:nowrap;transform:scaleX(0.9294);transform-origin:0 50%;">Ежова Т. С.</div><svg style="left:539.5px;top:423.325px" width="20" height="24"><path d="M9.5,2.5 c2.8,0 4.6,2 4.6,4.6 c0,2.4 -1.2,3.6 -2.6,4.4 v2.6 h4.8 a2,2 0 0 1 2,2 v4.5 h-17.6 v-4.5 a2,2 0 0 1 2,-2 h4.8 v-2.6 c-1.4,-0.8 -2.6,-2 -2.6,-4.4 c0,-2.6 1.8,-4.6 4.6,-4.6 z" fill="#c2c2c2"/></svg><div style="left:563.725px;top:423.85px;height:25.35px;line-height:25.35px;font-size:19.5px;color:#424242;white-space:nowrap;transform:scaleX(0.9450);transform-origin:0 50%;">Степанов А. В.</div><div style="left:807.025px;top:423.85px;height:25.35px;line-height:25.35px;font-size:19.5px;color:#424242;white-space:nowrap;transform:scaleX(0.9819);transform-origin:0 50%;">На проверке</div><svg style="left:1037px;top:424.825px" width="24" height="24"><polyline points="2.3,9.6 9.6,17.8 21.8,4.6" fill="none" stroke="#45ae47" stroke-width="2.1"/></svg><div style="left:1077.4px;top:422.22px;height:28.60px;line-height:28.60px;font-size:22px;color:#c9c9c9;white-space:nowrap;">?</div><div style="left:799.6px;top:454.04999999999995px;width:230.60000000000002px;height:35.55000000000001px;background:#faf3e1"></div><div style="left:102.6px;top:488.29999999999995px;width:996.8000000000001px;height:1.6000000000000227px;background:rgba(0,0,0,0.085)"></div><div style="left:230.2px;top:454.04999999999995px;width:1.6000000000000227px;height:35.05000000000001px;background:rgba(0,0,0,0.1)"></div><div style="left:303.2px;top:454.04999999999995px;width:1.6000000000000227px;height:35.05000000000001px;background:rgba(0,0,0,0.1)"></div><div style="left:533.2px;top:454.04999999999995px;width:1.599999999999909px;height:35.05000000000001px;background:rgba(0,0,0,0.1)"></div><div style="left:763.2px;top:454.04999999999995px;width:1.599999999999909px;height:35.05000000000001px;background:rgba(0,0,0,0.1)"></div><div style="left:797.2px;top:454.04999999999995px;width:1.599999999999909px;height:35.05000000000001px;background:rgba(0,0,0,0.1)"></div><div style="left:1030.2px;top:454.04999999999995px;width:1.599999999999909px;height:35.05000000000001px;background:rgba(0,0,0,0.1)"></div><div style="left:1065.2px;top:454.04999999999995px;width:1.599999999999909px;height:35.05000000000001px;background:rgba(0,0,0,0.1)"></div><div style="left:109.72500000000001px;top:458.90px;height:25.35px;line-height:25.35px;font-size:19.5px;color:#424242;white-space:nowrap;transform:scaleX(0.9188);transform-origin:0 50%;">15 апр 2026</div><div style="left:239.025px;top:458.90px;height:25.35px;line-height:25.35px;font-size:19.5px;color:#424242;white-space:nowrap;transform:scaleX(0.8666);transform-origin:0 50%;">14:05</div><div style="left:311px;top:457.94999999999993px;width:154px;height:26.5px;background:#b2e8d8"></div><div style="left:316.92499999999995px;top:458.90px;height:25.35px;line-height:25.35px;font-size:19.5px;color:#35404a;white-space:nowrap;transform:scaleX(0.9572);transform-origin:0 50%;">Верстакова А. Г.</div><svg style="left:539.5px;top:458.37499999999994px" width="20" height="24"><path d="M9.5,2.5 c2.8,0 4.6,2 4.6,4.6 c0,2.4 -1.2,3.6 -2.6,4.4 v2.6 h4.8 a2,2 0 0 1 2,2 v4.5 h-17.6 v-4.5 a2,2 0 0 1 2,-2 h4.8 v-2.6 c-1.4,-0.8 -2.6,-2 -2.6,-4.4 c0,-2.6 1.8,-4.6 4.6,-4.6 z" fill="#c2c2c2"/></svg><div style="left:563.725px;top:458.90px;height:25.35px;line-height:25.35px;font-size:19.5px;color:#424242;white-space:nowrap;transform:scaleX(0.9450);transform-origin:0 50%;">Начаркин И. А.</div><svg style="left:735px;top:458.57499999999993px" width="26" height="26"><g transform="translate(10.5,9.5)" fill="#5e5e5e"><rect x="-1.6" y="-8.6" width="3.2" height="4" transform="rotate(0)"/><rect x="-1.6" y="-8.6" width="3.2" height="4" transform="rotate(45)"/><rect x="-1.6" y="-8.6" width="3.2" height="4" transform="rotate(90)"/><rect x="-1.6" y="-8.6" width="3.2" height="4" transform="rotate(135)"/><rect x="-1.6" y="-8.6" width="3.2" height="4" transform="rotate(180)"/><rect x="-1.6" y="-8.6" width="3.2" height="4" transform="rotate(225)"/><rect x="-1.6" y="-8.6" width="3.2" height="4" transform="rotate(270)"/><rect x="-1.6" y="-8.6" width="3.2" height="4" transform="rotate(315)"/><circle r="5.8" fill="none" stroke="#5e5e5e" stroke-width="2.8"/></g><path d="M15.5,15.5 l7,7 M22.5,15.5 l-7,7" stroke="#fff" stroke-width="4.5"/><path d="M16,16 l6,6 M22,16 l-6,6" stroke="#5e5e5e" stroke-width="2.2"/></svg><div style="left:807.025px;top:458.90px;height:25.35px;line-height:25.35px;font-size:19.5px;color:#424242;white-space:nowrap;transform:scaleX(0.9819);transform-origin:0 50%;">На проверке</div><svg style="left:1037px;top:459.87499999999994px" width="24" height="24"><polyline points="2.3,9.6 9.6,17.8 21.8,4.6" fill="none" stroke="#45ae47" stroke-width="2.1"/></svg><div style="left:1077.4px;top:457.27px;height:28.60px;line-height:28.60px;font-size:22px;color:#c9c9c9;white-space:nowrap;">?</div><div style="left:799.6px;top:489.1px;width:230.60000000000002px;height:35.549999999999955px;background:#faf3e1"></div><div style="left:102.6px;top:523.35px;width:996.8000000000001px;height:1.599999999999909px;background:rgba(0,0,0,0.085)"></div><div style="left:230.2px;top:489.1px;width:1.6000000000000227px;height:35.049999999999955px;background:rgba(0,0,0,0.1)"></div><div style="left:303.2px;top:489.1px;width:1.6000000000000227px;height:35.049999999999955px;background:rgba(0,0,0,0.1)"></div><div style="left:533.2px;top:489.1px;width:1.599999999999909px;height:35.049999999999955px;background:rgba(0,0,0,0.1)"></div><div style="left:763.2px;top:489.1px;width:1.599999999999909px;height:35.049999999999955px;background:rgba(0,0,0,0.1)"></div><div style="left:797.2px;top:489.1px;width:1.599999999999909px;height:35.049999999999955px;background:rgba(0,0,0,0.1)"></div><div style="left:1030.2px;top:489.1px;width:1.599999999999909px;height:35.049999999999955px;background:rgba(0,0,0,0.1)"></div><div style="left:1065.2px;top:489.1px;width:1.599999999999909px;height:35.049999999999955px;background:rgba(0,0,0,0.1)"></div><div style="left:109.72500000000001px;top:493.95px;height:25.35px;line-height:25.35px;font-size:19.5px;color:#424242;white-space:nowrap;transform:scaleX(0.9188);transform-origin:0 50%;">15 апр 2026</div><div style="left:239.025px;top:493.95px;height:25.35px;line-height:25.35px;font-size:19.5px;color:#424242;white-space:nowrap;transform:scaleX(0.8666);transform-origin:0 50%;">08:29</div><div style="left:311px;top:493.0px;width:154px;height:26.5px;background:#b2e8d8"></div><div style="left:316.92499999999995px;top:493.95px;height:25.35px;line-height:25.35px;font-size:19.5px;color:#35404a;white-space:nowrap;transform:scaleX(0.9572);transform-origin:0 50%;">Верстакова А. Г.</div><svg style="left:539.5px;top:493.425px" width="20" height="24"><path d="M9.5,2.5 c2.8,0 4.6,2 4.6,4.6 c0,2.4 -1.2,3.6 -2.6,4.4 v2.6 h4.8 a2,2 0 0 1 2,2 v4.5 h-17.6 v-4.5 a2,2 0 0 1 2,-2 h4.8 v-2.6 c-1.4,-0.8 -2.6,-2 -2.6,-4.4 c0,-2.6 1.8,-4.6 4.6,-4.6 z" fill="#c2c2c2"/></svg><div style="left:563.725px;top:493.95px;height:25.35px;line-height:25.35px;font-size:19.5px;color:#424242;white-space:nowrap;transform:scaleX(0.9450);transform-origin:0 50%;">Онина Е. А.</div><div style="left:807.025px;top:493.95px;height:25.35px;line-height:25.35px;font-size:19.5px;color:#424242;white-space:nowrap;transform:scaleX(0.9819);transform-origin:0 50%;">На проверке</div><svg style="left:1037px;top:494.925px" width="24" height="24"><polyline points="2.3,9.6 9.6,17.8 21.8,4.6" fill="none" stroke="#45ae47" stroke-width="2.1"/></svg><div style="left:1077.4px;top:492.32px;height:28.60px;line-height:28.60px;font-size:22px;color:#c9c9c9;white-space:nowrap;">?</div><div style="left:102.6px;top:524.15px;width:996.8000000000001px;height:35.049999999999955px;background:#f0f4fe"></div><div style="left:799.6px;top:524.15px;width:230.60000000000002px;height:35.549999999999955px;background:#efe3ec"></div><div style="left:102.6px;top:558.4px;width:996.8000000000001px;height:1.599999999999909px;background:rgba(0,0,0,0.085)"></div><div style="left:230.2px;top:524.15px;width:1.6000000000000227px;height:35.049999999999955px;background:rgba(0,0,0,0.1)"></div><div style="left:303.2px;top:524.15px;width:1.6000000000000227px;height:35.049999999999955px;background:rgba(0,0,0,0.1)"></div><div style="left:533.2px;top:524.15px;width:1.599999999999909px;height:35.049999999999955px;background:rgba(0,0,0,0.1)"></div><div style="left:763.2px;top:524.15px;width:1.599999999999909px;height:35.049999999999955px;background:rgba(0,0,0,0.1)"></div><div style="left:797.2px;top:524.15px;width:1.599999999999909px;height:35.049999999999955px;background:rgba(0,0,0,0.1)"></div><div style="left:1030.2px;top:524.15px;width:1.599999999999909px;height:35.049999999999955px;background:rgba(0,0,0,0.1)"></div><div style="left:1065.2px;top:524.15px;width:1.599999999999909px;height:35.049999999999955px;background:rgba(0,0,0,0.1)"></div><div style="left:109.72500000000001px;top:529.00px;height:25.35px;line-height:25.35px;font-size:19.5px;color:#424242;white-space:nowrap;transform:scaleX(0.9188);transform-origin:0 50%;">15 апр 2026</div><div style="left:311px;top:528.05px;width:154px;height:26.5px;background:#b2e8d8"></div><div style="left:316.92499999999995px;top:529.00px;height:25.35px;line-height:25.35px;font-size:19.5px;color:#35404a;white-space:nowrap;transform:scaleX(0.9572);transform-origin:0 50%;">Верстакова А. Г.</div><svg style="left:539.5px;top:528.4749999999999px" width="20" height="24"><path d="M9.5,2.5 c2.8,0 4.6,2 4.6,4.6 c0,2.4 -1.2,3.6 -2.6,4.4 v2.6 h4.8 a2,2 0 0 1 2,2 v4.5 h-17.6 v-4.5 a2,2 0 0 1 2,-2 h4.8 v-2.6 c-1.4,-0.8 -2.6,-2 -2.6,-4.4 c0,-2.6 1.8,-4.6 4.6,-4.6 z" fill="#c2c2c2"/></svg><div style="left:563.725px;top:529.00px;height:25.35px;line-height:25.35px;font-size:19.5px;color:#424242;white-space:nowrap;transform:scaleX(0.9450);transform-origin:0 50%;">Логинова М.</div><div style="left:807.025px;top:529.00px;height:25.35px;line-height:25.35px;font-size:19.5px;color:#424242;white-space:nowrap;transform:scaleX(0.9685);transform-origin:0 50%;">На доработке</div><svg style="left:1037px;top:529.9749999999999px" width="24" height="24"><polyline points="2.3,9.6 9.6,17.8 21.8,4.6" fill="none" stroke="#45ae47" stroke-width="2.1"/></svg><svg style="left:1072.2px;top:529.4749999999999px" width="24" height="24"><path d="M3.5,3 L20.5,20.5 M20.5,3 L3.5,20.5" stroke="#ee5a62" stroke-width="2.2"/></svg><div style="left:101px;top:523.35px;width:1000px;height:36.44999999999993px;border:2px solid #9cb0f8"></div><div style="left:799.6px;top:559.1999999999999px;width:230.60000000000002px;height:35.549999999999955px;background:#faf3e1"></div><div style="left:102.6px;top:593.4499999999999px;width:996.8000000000001px;height:1.599999999999909px;background:rgba(0,0,0,0.085)"></div><div style="left:230.2px;top:559.1999999999999px;width:1.6000000000000227px;height:35.049999999999955px;background:rgba(0,0,0,0.1)"></div><div style="left:303.2px;top:559.1999999999999px;width:1.6000000000000227px;height:35.049999999999955px;background:rgba(0,0,0,0.1)"></div><div style="left:533.2px;top:559.1999999999999px;width:1.599999999999909px;height:35.049999999999955px;background:rgba(0,0,0,0.1)"></div><div style="left:763.2px;top:559.1999999999999px;width:1.599999999999909px;height:35.049999999999955px;background:rgba(0,0,0,0.1)"></div><div style="left:797.2px;top:559.1999999999999px;width:1.599999999999909px;height:35.049999999999955px;background:rgba(0,0,0,0.1)"></div><div style="left:1030.2px;top:559.1999999999999px;width:1.599999999999909px;height:35.049999999999955px;background:rgba(0,0,0,0.1)"></div><div style="left:1065.2px;top:559.1999999999999px;width:1.599999999999909px;height:35.049999999999955px;background:rgba(0,0,0,0.1)"></div><div style="left:109.72500000000001px;top:564.05px;height:25.35px;line-height:25.35px;font-size:19.5px;color:#424242;white-space:nowrap;transform:scaleX(0.9188);transform-origin:0 50%;">14 апр 2026</div><div style="left:239.025px;top:564.05px;height:25.35px;line-height:25.35px;font-size:19.5px;color:#424242;white-space:nowrap;transform:scaleX(0.8666);transform-origin:0 50%;">14:08</div><div style="left:311px;top:563.0999999999999px;width:154px;height:26.5px;background:#b2e8d8"></div><div style="left:316.92499999999995px;top:564.05px;height:25.35px;line-height:25.35px;font-size:19.5px;color:#35404a;white-space:nowrap;transform:scaleX(0.9572);transform-origin:0 50%;">Верстакова А. Г.</div><svg style="left:539.5px;top:563.5249999999999px" width="20" height="24"><path d="M9.5,2.5 c2.8,0 4.6,2 4.6,4.6 c0,2.4 -1.2,3.6 -2.6,4.4 v2.6 h4.8 a2,2 0 0 1 2,2 v4.5 h-17.6 v-4.5 a2,2 0 0 1 2,-2 h4.8 v-2.6 c-1.4,-0.8 -2.6,-2 -2.6,-4.4 c0,-2.6 1.8,-4.6 4.6,-4.6 z" fill="#c2c2c2"/></svg><div style="left:563.725px;top:564.05px;height:25.35px;line-height:25.35px;font-size:19.5px;color:#424242;white-space:nowrap;transform:scaleX(0.9450);transform-origin:0 50%;">Сафонова В. В.</div><div style="left:807.025px;top:564.05px;height:25.35px;line-height:25.35px;font-size:19.5px;color:#424242;white-space:nowrap;transform:scaleX(0.9819);transform-origin:0 50%;">На проверке</div><svg style="left:1037px;top:565.0249999999999px" width="24" height="24"><polyline points="2.3,9.6 9.6,17.8 21.8,4.6" fill="none" stroke="#45ae47" stroke-width="2.1"/></svg><div style="left:1077.4px;top:562.42px;height:28.60px;line-height:28.60px;font-size:22px;color:#c9c9c9;white-space:nowrap;">?</div><div style="left:799.6px;top:594.25px;width:230.60000000000002px;height:35.549999999999955px;background:#faf3e1"></div><div style="left:102.6px;top:628.5px;width:996.8000000000001px;height:1.599999999999909px;background:rgba(0,0,0,0.085)"></div><div style="left:230.2px;top:594.25px;width:1.6000000000000227px;height:35.049999999999955px;background:rgba(0,0,0,0.1)"></div><div style="left:303.2px;top:594.25px;width:1.6000000000000227px;height:35.049999999999955px;background:rgba(0,0,0,0.1)"></div><div style="left:533.2px;top:594.25px;width:1.599999999999909px;height:35.049999999999955px;background:rgba(0,0,0,0.1)"></div><div style="left:763.2px;top:594.25px;width:1.599999999999909px;height:35.049999999999955px;background:rgba(0,0,0,0.1)"></div><div style="left:797.2px;top:594.25px;width:1.599999999999909px;height:35.049999999999955px;background:rgba(0,0,0,0.1)"></div><div style="left:1030.2px;top:594.25px;width:1.599999999999909px;height:35.049999999999955px;background:rgba(0,0,0,0.1)"></div><div style="left:1065.2px;top:594.25px;width:1.599999999999909px;height:35.049999999999955px;background:rgba(0,0,0,0.1)"></div><div style="left:109.72500000000001px;top:599.10px;height:25.35px;line-height:25.35px;font-size:19.5px;color:#424242;white-space:nowrap;transform:scaleX(0.9188);transform-origin:0 50%;">14 апр 2026</div><div style="left:239.025px;top:599.10px;height:25.35px;line-height:25.35px;font-size:19.5px;color:#424242;white-space:nowrap;transform:scaleX(0.8666);transform-origin:0 50%;">10:03</div><div style="left:311px;top:598.15px;width:154px;height:26.5px;background:#b2e8d8"></div><div style="left:316.92499999999995px;top:599.10px;height:25.35px;line-height:25.35px;font-size:19.5px;color:#35404a;white-space:nowrap;transform:scaleX(0.9572);transform-origin:0 50%;">Верстакова А. Г.</div><svg style="left:539.5px;top:598.5749999999999px" width="20" height="24"><path d="M9.5,2.5 c2.8,0 4.6,2 4.6,4.6 c0,2.4 -1.2,3.6 -2.6,4.4 v2.6 h4.8 a2,2 0 0 1 2,2 v4.5 h-17.6 v-4.5 a2,2 0 0 1 2,-2 h4.8 v-2.6 c-1.4,-0.8 -2.6,-2 -2.6,-4.4 c0,-2.6 1.8,-4.6 4.6,-4.6 z" fill="#c2c2c2"/></svg><div style="left:563.725px;top:599.10px;height:25.35px;line-height:25.35px;font-size:19.5px;color:#424242;white-space:nowrap;transform:scaleX(0.9450);transform-origin:0 50%;">Нагерных С. В.</div><div style="left:807.025px;top:599.10px;height:25.35px;line-height:25.35px;font-size:19.5px;color:#424242;white-space:nowrap;transform:scaleX(0.9819);transform-origin:0 50%;">На проверке</div><svg style="left:1037px;top:600.0749999999999px" width="24" height="24"><polyline points="2.3,9.6 9.6,17.8 21.8,4.6" fill="none" stroke="#45ae47" stroke-width="2.1"/></svg><div style="left:1077.4px;top:597.48px;height:28.60px;line-height:28.60px;font-size:22px;color:#c9c9c9;white-space:nowrap;">?</div><div style="left:799.6px;top:629.3px;width:230.60000000000002px;height:35.549999999999955px;background:#faf3e1"></div><div style="left:102.6px;top:663.55px;width:996.8000000000001px;height:1.599999999999909px;background:rgba(0,0,0,0.085)"></div><div style="left:230.2px;top:629.3px;width:1.6000000000000227px;height:35.049999999999955px;background:rgba(0,0,0,0.1)"></div><div style="left:303.2px;top:629.3px;width:1.6000000000000227px;height:35.049999999999955px;background:rgba(0,0,0,0.1)"></div><div style="left:533.2px;top:629.3px;width:1.599999999999909px;height:35.049999999999955px;background:rgba(0,0,0,0.1)"></div><div style="left:763.2px;top:629.3px;width:1.599999999999909px;height:35.049999999999955px;background:rgba(0,0,0,0.1)"></div><div style="left:797.2px;top:629.3px;width:1.599999999999909px;height:35.049999999999955px;background:rgba(0,0,0,0.1)"></div><div style="left:1030.2px;top:629.3px;width:1.599999999999909px;height:35.049999999999955px;background:rgba(0,0,0,0.1)"></div><div style="left:1065.2px;top:629.3px;width:1.599999999999909px;height:35.049999999999955px;background:rgba(0,0,0,0.1)"></div><div style="left:109.72500000000001px;top:634.15px;height:25.35px;line-height:25.35px;font-size:19.5px;color:#424242;white-space:nowrap;transform:scaleX(0.9188);transform-origin:0 50%;">14 апр 2026</div><div style="left:311px;top:633.1999999999999px;width:154px;height:26.5px;background:#b2e8d8"></div><div style="left:316.92499999999995px;top:634.15px;height:25.35px;line-height:25.35px;font-size:19.5px;color:#35404a;white-space:nowrap;transform:scaleX(0.9572);transform-origin:0 50%;">Верстакова А. Г.</div><svg style="left:539.5px;top:633.6249999999999px" width="20" height="24"><path d="M9.5,2.5 c2.8,0 4.6,2 4.6,4.6 c0,2.4 -1.2,3.6 -2.6,4.4 v2.6 h4.8 a2,2 0 0 1 2,2 v4.5 h-17.6 v-4.5 a2,2 0 0 1 2,-2 h4.8 v-2.6 c-1.4,-0.8 -2.6,-2 -2.6,-4.4 c0,-2.6 1.8,-4.6 4.6,-4.6 z" fill="#c2c2c2"/></svg><div style="left:563.725px;top:634.15px;height:25.35px;line-height:25.35px;font-size:19.5px;color:#424242;white-space:nowrap;transform:scaleX(0.9450);transform-origin:0 50%;">Сафонова В. В.</div><div style="left:807.025px;top:634.15px;height:25.35px;line-height:25.35px;font-size:19.5px;color:#424242;white-space:nowrap;transform:scaleX(0.9819);transform-origin:0 50%;">На проверке</div><svg style="left:1037px;top:635.1249999999999px" width="24" height="24"><polyline points="2.3,9.6 9.6,17.8 21.8,4.6" fill="none" stroke="#45ae47" stroke-width="2.1"/></svg><div style="left:1077.4px;top:632.52px;height:28.60px;line-height:28.60px;font-size:22px;color:#c9c9c9;white-space:nowrap;">?</div><div style="left:799.6px;top:664.3499999999999px;width:230.60000000000002px;height:35.549999999999955px;background:#faf3e1"></div><div style="left:102.6px;top:698.5999999999999px;width:996.8000000000001px;height:1.599999999999909px;background:rgba(0,0,0,0.085)"></div><div style="left:230.2px;top:664.3499999999999px;width:1.6000000000000227px;height:35.049999999999955px;background:rgba(0,0,0,0.1)"></div><div style="left:303.2px;top:664.3499999999999px;width:1.6000000000000227px;height:35.049999999999955px;background:rgba(0,0,0,0.1)"></div><div style="left:533.2px;top:664.3499999999999px;width:1.599999999999909px;height:35.049999999999955px;background:rgba(0,0,0,0.1)"></div><div style="left:763.2px;top:664.3499999999999px;width:1.599999999999909px;height:35.049999999999955px;background:rgba(0,0,0,0.1)"></div><div style="left:797.2px;top:664.3499999999999px;width:1.599999999999909px;height:35.049999999999955px;background:rgba(0,0,0,0.1)"></div><div style="left:1030.2px;top:664.3499999999999px;width:1.599999999999909px;height:35.049999999999955px;background:rgba(0,0,0,0.1)"></div><div style="left:1065.2px;top:664.3499999999999px;width:1.599999999999909px;height:35.049999999999955px;background:rgba(0,0,0,0.1)"></div><div style="left:109.72500000000001px;top:669.20px;height:25.35px;line-height:25.35px;font-size:19.5px;color:#424242;white-space:nowrap;transform:scaleX(0.9314);transform-origin:0 50%;">11 апр 2026</div><div style="left:239.025px;top:669.20px;height:25.35px;line-height:25.35px;font-size:19.5px;color:#424242;white-space:nowrap;transform:scaleX(0.8666);transform-origin:0 50%;">19:29</div><div style="left:311px;top:668.2499999999999px;width:154px;height:26.5px;background:#b2e8d8"></div><div style="left:316.92499999999995px;top:669.20px;height:25.35px;line-height:25.35px;font-size:19.5px;color:#35404a;white-space:nowrap;transform:scaleX(0.9572);transform-origin:0 50%;">Верстакова А. Г.</div><svg style="left:539.5px;top:668.6749999999998px" width="20" height="24"><path d="M9.5,2.5 c2.8,0 4.6,2 4.6,4.6 c0,2.4 -1.2,3.6 -2.6,4.4 v2.6 h4.8 a2,2 0 0 1 2,2 v4.5 h-17.6 v-4.5 a2,2 0 0 1 2,-2 h4.8 v-2.6 c-1.4,-0.8 -2.6,-2 -2.6,-4.4 c0,-2.6 1.8,-4.6 4.6,-4.6 z" fill="#c2c2c2"/></svg><div style="left:563.725px;top:669.20px;height:25.35px;line-height:25.35px;font-size:19.5px;color:#424242;white-space:nowrap;transform:scaleX(0.9450);transform-origin:0 50%;">Козлов Д. Ю.</div><div style="left:807.025px;top:669.20px;height:25.35px;line-height:25.35px;font-size:19.5px;color:#424242;white-space:nowrap;transform:scaleX(0.9819);transform-origin:0 50%;">На проверке</div><svg style="left:1037px;top:670.1749999999998px" width="24" height="24"><polyline points="2.3,9.6 9.6,17.8 21.8,4.6" fill="none" stroke="#45ae47" stroke-width="2.1"/></svg><div style="left:1077.4px;top:667.57px;height:28.60px;line-height:28.60px;font-size:22px;color:#c9c9c9;white-space:nowrap;">?</div><div style="left:799.6px;top:699.4px;width:230.60000000000002px;height:35.549999999999955px;background:#faf3e1"></div><div style="left:102.6px;top:733.65px;width:996.8000000000001px;height:1.599999999999909px;background:rgba(0,0,0,0.085)"></div><div style="left:230.2px;top:699.4px;width:1.6000000000000227px;height:35.049999999999955px;background:rgba(0,0,0,0.1)"></div><div style="left:303.2px;top:699.4px;width:1.6000000000000227px;height:35.049999999999955px;background:rgba(0,0,0,0.1)"></div><div style="left:533.2px;top:699.4px;width:1.599999999999909px;height:35.049999999999955px;background:rgba(0,0,0,0.1)"></div><div style="left:763.2px;top:699.4px;width:1.599999999999909px;height:35.049999999999955px;background:rgba(0,0,0,0.1)"></div><div style="left:797.2px;top:699.4px;width:1.599999999999909px;height:35.049999999999955px;background:rgba(0,0,0,0.1)"></div><div style="left:1030.2px;top:699.4px;width:1.599999999999909px;height:35.049999999999955px;background:rgba(0,0,0,0.1)"></div><div style="left:1065.2px;top:699.4px;width:1.599999999999909px;height:35.049999999999955px;background:rgba(0,0,0,0.1)"></div><div style="left:109.72500000000001px;top:704.25px;height:25.35px;line-height:25.35px;font-size:19.5px;color:#424242;white-space:nowrap;transform:scaleX(0.9314);transform-origin:0 50%;">11 апр 2026</div><div style="left:239.025px;top:704.25px;height:25.35px;line-height:25.35px;font-size:19.5px;color:#424242;white-space:nowrap;transform:scaleX(0.8666);transform-origin:0 50%;">19:00</div><div style="left:311px;top:703.3px;width:143px;height:26.5px;background:#e8a9ca"></div><div style="left:316.92499999999995px;top:704.25px;height:25.35px;line-height:25.35px;font-size:19.5px;color:#35404a;white-space:nowrap;transform:scaleX(0.9656);transform-origin:0 50%;">Андреева Г. М.</div><svg style="left:539.5px;top:703.7249999999999px" width="20" height="24"><path d="M9.5,2.5 c2.8,0 4.6,2 4.6,4.6 c0,2.4 -1.2,3.6 -2.6,4.4 v2.6 h4.8 a2,2 0 0 1 2,2 v4.5 h-17.6 v-4.5 a2,2 0 0 1 2,-2 h4.8 v-2.6 c-1.4,-0.8 -2.6,-2 -2.6,-4.4 c0,-2.6 1.8,-4.6 4.6,-4.6 z" fill="#ffb300"/></svg><div style="left:563.725px;top:704.25px;height:25.35px;line-height:25.35px;font-size:19.5px;color:#424242;white-space:nowrap;transform:scaleX(0.9450);transform-origin:0 50%;">Ефимов К.</div><div style="left:807.025px;top:704.25px;height:25.35px;line-height:25.35px;font-size:19.5px;color:#424242;white-space:nowrap;transform:scaleX(0.9819);transform-origin:0 50%;">На проверке</div><svg style="left:1037px;top:705.2249999999999px" width="24" height="24"><polyline points="2.3,9.6 9.6,17.8 21.8,4.6" fill="none" stroke="#45ae47" stroke-width="2.1"/></svg><div style="left:1077.4px;top:702.62px;height:28.60px;line-height:28.60px;font-size:22px;color:#c9c9c9;white-space:nowrap;">?</div><div style="left:799.6px;top:734.4499999999999px;width:230.60000000000002px;height:35.549999999999955px;background:#fbe9e9"></div><div style="left:102.6px;top:768.6999999999999px;width:996.8000000000001px;height:1.599999999999909px;background:rgba(0,0,0,0.085)"></div><div style="left:230.2px;top:734.4499999999999px;width:1.6000000000000227px;height:35.049999999999955px;background:rgba(0,0,0,0.1)"></div><div style="left:303.2px;top:734.4499999999999px;width:1.6000000000000227px;height:35.049999999999955px;background:rgba(0,0,0,0.1)"></div><div style="left:533.2px;top:734.4499999999999px;width:1.599999999999909px;height:35.049999999999955px;background:rgba(0,0,0,0.1)"></div><div style="left:763.2px;top:734.4499999999999px;width:1.599999999999909px;height:35.049999999999955px;background:rgba(0,0,0,0.1)"></div><div style="left:797.2px;top:734.4499999999999px;width:1.599999999999909px;height:35.049999999999955px;background:rgba(0,0,0,0.1)"></div><div style="left:1030.2px;top:734.4499999999999px;width:1.599999999999909px;height:35.049999999999955px;background:rgba(0,0,0,0.1)"></div><div style="left:1065.2px;top:734.4499999999999px;width:1.599999999999909px;height:35.049999999999955px;background:rgba(0,0,0,0.1)"></div><div style="left:109.72500000000001px;top:739.30px;height:25.35px;line-height:25.35px;font-size:19.5px;color:#424242;white-space:nowrap;transform:scaleX(0.9188);transform-origin:0 50%;">10 апр 2026</div><div style="left:311px;top:738.3499999999999px;width:136px;height:26.5px;background:#b6e0f5"></div><div style="left:316.92499999999995px;top:739.30px;height:25.35px;line-height:25.35px;font-size:19.5px;color:#35404a;white-space:nowrap;transform:scaleX(0.9661);transform-origin:0 50%;">Морозов А. С.</div><svg style="left:539.5px;top:738.7749999999999px" width="20" height="24"><path d="M9.5,2.5 c2.8,0 4.6,2 4.6,4.6 c0,2.4 -1.2,3.6 -2.6,4.4 v2.6 h4.8 a2,2 0 0 1 2,2 v4.5 h-17.6 v-4.5 a2,2 0 0 1 2,-2 h4.8 v-2.6 c-1.4,-0.8 -2.6,-2 -2.6,-4.4 c0,-2.6 1.8,-4.6 4.6,-4.6 z" fill="#ffb300"/></svg><div style="left:563.725px;top:739.30px;height:25.35px;line-height:25.35px;font-size:19.5px;color:#424242;white-space:nowrap;transform:scaleX(0.9450);transform-origin:0 50%;">Кучунин К.</div><div style="left:807.025px;top:739.30px;height:25.35px;line-height:25.35px;font-size:19.5px;color:#424242;white-space:nowrap;transform:scaleX(0.9685);transform-origin:0 50%;">На доработке</div><svg style="left:800px;top:735.4499999999999px" width="14" height="14"><path d="M0,0 h12 l-12,12 z" fill="#ee4444"/></svg><svg style="left:1037px;top:740.2749999999999px" width="24" height="24"><polyline points="2.3,9.6 9.6,17.8 21.8,4.6" fill="none" stroke="#45ae47" stroke-width="2.1"/></svg><svg style="left:1072.2px;top:739.7749999999999px" width="24" height="24"><path d="M3.5,3 L20.5,20.5 M20.5,3 L3.5,20.5" stroke="#ee5a62" stroke-width="2.2"/></svg><div style="left:799.6px;top:769.4999999999999px;width:230.60000000000002px;height:35.549999999999955px;background:#faf3e1"></div><div style="left:102.6px;top:803.7499999999999px;width:996.8000000000001px;height:1.599999999999909px;background:rgba(0,0,0,0.085)"></div><div style="left:230.2px;top:769.4999999999999px;width:1.6000000000000227px;height:35.049999999999955px;background:rgba(0,0,0,0.1)"></div><div style="left:303.2px;top:769.4999999999999px;width:1.6000000000000227px;height:35.049999999999955px;background:rgba(0,0,0,0.1)"></div><div style="left:533.2px;top:769.4999999999999px;width:1.599999999999909px;height:35.049999999999955px;background:rgba(0,0,0,0.1)"></div><div style="left:763.2px;top:769.4999999999999px;width:1.599999999999909px;height:35.049999999999955px;background:rgba(0,0,0,0.1)"></div><div style="left:797.2px;top:769.4999999999999px;width:1.599999999999909px;height:35.049999999999955px;background:rgba(0,0,0,0.1)"></div><div style="left:1030.2px;top:769.4999999999999px;width:1.599999999999909px;height:35.049999999999955px;background:rgba(0,0,0,0.1)"></div><div style="left:1065.2px;top:769.4999999999999px;width:1.599999999999909px;height:35.049999999999955px;background:rgba(0,0,0,0.1)"></div><div style="left:109.72500000000001px;top:774.35px;height:25.35px;line-height:25.35px;font-size:19.5px;color:#424242;white-space:nowrap;transform:scaleX(0.9188);transform-origin:0 50%;">06 апр 2026</div><div style="left:239.025px;top:774.35px;height:25.35px;line-height:25.35px;font-size:19.5px;color:#424242;white-space:nowrap;transform:scaleX(0.8666);transform-origin:0 50%;">16:41</div><div style="left:311px;top:773.3999999999999px;width:170px;height:26.5px;background:#b1bdee"></div><div style="left:316.92499999999995px;top:774.35px;height:25.35px;line-height:25.35px;font-size:19.5px;color:#35404a;white-space:nowrap;transform:scaleX(0.9464);transform-origin:0 50%;">Виноградова И. Б.</div><svg style="left:539.5px;top:773.8249999999998px" width="20" height="24"><path d="M9.5,2.5 c2.8,0 4.6,2 4.6,4.6 c0,2.4 -1.2,3.6 -2.6,4.4 v2.6 h4.8 a2,2 0 0 1 2,2 v4.5 h-17.6 v-4.5 a2,2 0 0 1 2,-2 h4.8 v-2.6 c-1.4,-0.8 -2.6,-2 -2.6,-4.4 c0,-2.6 1.8,-4.6 4.6,-4.6 z" fill="#ffb300"/></svg><div style="left:563.725px;top:774.35px;height:25.35px;line-height:25.35px;font-size:19.5px;color:#424242;white-space:nowrap;transform:scaleX(0.9450);transform-origin:0 50%;">Комягин С. П.</div><svg style="left:771.5px;top:777.0249999999999px" width="22" height="20"><rect x="1" y="2.5" width="19" height="15" fill="none" stroke="#cdcdcd" stroke-width="1.8"/><rect x="4.5" y="5.5" width="2.5" height="3" fill="#cdcdcd"/><path d="M4.5,14.5 l4,-3 l3,2 l2,-1.5 l4,2.5 z" fill="#cdcdcd"/></svg><div style="left:807.025px;top:774.35px;height:25.35px;line-height:25.35px;font-size:19.5px;color:#424242;white-space:nowrap;transform:scaleX(0.9819);transform-origin:0 50%;">На проверке</div><svg style="left:1037px;top:775.3249999999998px" width="24" height="24"><polyline points="2.3,9.6 9.6,17.8 21.8,4.6" fill="none" stroke="#45ae47" stroke-width="2.1"/></svg><div style="left:1077.4px;top:772.72px;height:28.60px;line-height:28.60px;font-size:22px;color:#c9c9c9;white-space:nowrap;">?</div><div style="left:799.6px;top:804.55px;width:230.60000000000002px;height:35.549999999999955px;background:#fbe9e9"></div><div style="left:102.6px;top:838.8px;width:996.8000000000001px;height:1.599999999999909px;background:rgba(0,0,0,0.085)"></div><div style="left:230.2px;top:804.55px;width:1.6000000000000227px;height:35.049999999999955px;background:rgba(0,0,0,0.1)"></div><div style="left:303.2px;top:804.55px;width:1.6000000000000227px;height:35.049999999999955px;background:rgba(0,0,0,0.1)"></div><div style="left:533.2px;top:804.55px;width:1.599999999999909px;height:35.049999999999955px;background:rgba(0,0,0,0.1)"></div><div style="left:763.2px;top:804.55px;width:1.599999999999909px;height:35.049999999999955px;background:rgba(0,0,0,0.1)"></div><div style="left:797.2px;top:804.55px;width:1.599999999999909px;height:35.049999999999955px;background:rgba(0,0,0,0.1)"></div><div style="left:1030.2px;top:804.55px;width:1.599999999999909px;height:35.049999999999955px;background:rgba(0,0,0,0.1)"></div><div style="left:1065.2px;top:804.55px;width:1.599999999999909px;height:35.049999999999955px;background:rgba(0,0,0,0.1)"></div><div style="left:109.72500000000001px;top:809.40px;height:25.35px;line-height:25.35px;font-size:19.5px;color:#424242;white-space:nowrap;transform:scaleX(0.9188);transform-origin:0 50%;">06 апр 2026</div><div style="left:239.025px;top:809.40px;height:25.35px;line-height:25.35px;font-size:19.5px;color:#424242;white-space:nowrap;transform:scaleX(0.8666);transform-origin:0 50%;">15:43</div><div style="left:311px;top:808.4499999999999px;width:170px;height:26.5px;background:#b1bdee"></div><div style="left:316.92499999999995px;top:809.40px;height:25.35px;line-height:25.35px;font-size:19.5px;color:#35404a;white-space:nowrap;transform:scaleX(0.9464);transform-origin:0 50%;">Виноградова И. Б.</div><svg style="left:539.5px;top:808.8749999999999px" width="20" height="24"><path d="M9.5,2.5 c2.8,0 4.6,2 4.6,4.6 c0,2.4 -1.2,3.6 -2.6,4.4 v2.6 h4.8 a2,2 0 0 1 2,2 v4.5 h-17.6 v-4.5 a2,2 0 0 1 2,-2 h4.8 v-2.6 c-1.4,-0.8 -2.6,-2 -2.6,-4.4 c0,-2.6 1.8,-4.6 4.6,-4.6 z" fill="#ffb300"/></svg><div style="left:563.725px;top:809.40px;height:25.35px;line-height:25.35px;font-size:19.5px;color:#424242;white-space:nowrap;transform:scaleX(0.9450);transform-origin:0 50%;">Перфильева Е. В.</div><svg style="left:771.5px;top:812.0749999999999px" width="22" height="20"><rect x="1" y="2.5" width="19" height="15" fill="none" stroke="#cdcdcd" stroke-width="1.8"/><rect x="4.5" y="5.5" width="2.5" height="3" fill="#cdcdcd"/><path d="M4.5,14.5 l4,-3 l3,2 l2,-1.5 l4,2.5 z" fill="#cdcdcd"/></svg><div style="left:807.025px;top:809.40px;height:25.35px;line-height:25.35px;font-size:19.5px;color:#424242;white-space:nowrap;transform:scaleX(0.9685);transform-origin:0 50%;">На доработке</div><svg style="left:1037px;top:810.3749999999999px" width="24" height="24"><polyline points="2.3,9.6 9.6,17.8 21.8,4.6" fill="none" stroke="#45ae47" stroke-width="2.1"/></svg><svg style="left:1072.2px;top:809.8749999999999px" width="24" height="24"><path d="M3.5,3 L20.5,20.5 M20.5,3 L3.5,20.5" stroke="#ee5a62" stroke-width="2.2"/></svg><div style="left:102.6px;top:839.5999999999999px;width:996.8000000000001px;height:35.549999999999955px;background:#e8f5fe"></div><div style="left:102.6px;top:873.8499999999999px;width:996.8000000000001px;height:1.599999999999909px;background:rgba(0,0,0,0.075)"></div><div style="left:109.72500000000001px;top:844.45px;height:25.35px;line-height:25.35px;font-size:19.5px;color:#444;white-space:nowrap;transform:scaleX(0.9429);transform-origin:0 50%;">Утверждены – 6</div><div style="left:799.6px;top:874.65px;width:230.60000000000002px;height:35.549999999999955px;background:#e5f8e6"></div><div style="left:102.6px;top:908.9px;width:996.8000000000001px;height:1.599999999999909px;background:rgba(0,0,0,0.085)"></div><div style="left:230.2px;top:874.65px;width:1.6000000000000227px;height:35.049999999999955px;background:rgba(0,0,0,0.1)"></div><div style="left:303.2px;top:874.65px;width:1.6000000000000227px;height:35.049999999999955px;background:rgba(0,0,0,0.1)"></div><div style="left:533.2px;top:874.65px;width:1.599999999999909px;height:35.049999999999955px;background:rgba(0,0,0,0.1)"></div><div style="left:763.2px;top:874.65px;width:1.599999999999909px;height:35.049999999999955px;background:rgba(0,0,0,0.1)"></div><div style="left:797.2px;top:874.65px;width:1.599999999999909px;height:35.049999999999955px;background:rgba(0,0,0,0.1)"></div><div style="left:1030.2px;top:874.65px;width:1.599999999999909px;height:35.049999999999955px;background:rgba(0,0,0,0.1)"></div><div style="left:1065.2px;top:874.65px;width:1.599999999999909px;height:35.049999999999955px;background:rgba(0,0,0,0.1)"></div><div style="left:109.72500000000001px;top:879.50px;height:25.35px;line-height:25.35px;font-size:19.5px;color:#424242;white-space:nowrap;transform:scaleX(0.9188);transform-origin:0 50%;">17 апр 2026</div><div style="left:239.025px;top:879.50px;height:25.35px;line-height:25.35px;font-size:19.5px;color:#424242;white-space:nowrap;transform:scaleX(0.8666);transform-origin:0 50%;">17:42</div><div style="left:311px;top:878.55px;width:170px;height:26.5px;background:#b1bdee"></div><div style="left:316.92499999999995px;top:879.50px;height:25.35px;line-height:25.35px;font-size:19.5px;color:#35404a;white-space:nowrap;transform:scaleX(0.9464);transform-origin:0 50%;">Виноградова И. Б.</div><svg style="left:539.5px;top:878.9749999999999px" width="20" height="24"><path d="M9.5,2.5 c2.8,0 4.6,2 4.6,4.6 c0,2.4 -1.2,3.6 -2.6,4.4 v2.6 h4.8 a2,2 0 0 1 2,2 v4.5 h-17.6 v-4.5 a2,2 0 0 1 2,-2 h4.8 v-2.6 c-1.4,-0.8 -2.6,-2 -2.6,-4.4 c0,-2.6 1.8,-4.6 4.6,-4.6 z" fill="#c2c2c2"/></svg><div style="left:563.725px;top:879.50px;height:25.35px;line-height:25.35px;font-size:19.5px;color:#424242;white-space:nowrap;transform:scaleX(0.9450);transform-origin:0 50%;">Зубровская А. К.</div><div style="left:807.025px;top:879.50px;height:25.35px;line-height:25.35px;font-size:19.5px;color:#424242;white-space:nowrap;transform:scaleX(0.9571);transform-origin:0 50%;">Утвержден</div><svg style="left:1037px;top:880.4749999999999px" width="24" height="24"><polyline points="2.3,9.6 9.6,17.8 21.8,4.6" fill="none" stroke="#45ae47" stroke-width="2.1"/></svg><svg style="left:1072px;top:880.4749999999999px" width="24" height="24"><polyline points="2.3,9.6 9.6,17.8 21.8,4.6" fill="none" stroke="#45ae47" stroke-width="2.1"/></svg><div style="left:799.6px;top:909.6999999999999px;width:230.60000000000002px;height:35.549999999999955px;background:#e5f8e6"></div><div style="left:102.6px;top:943.9499999999999px;width:996.8000000000001px;height:1.599999999999909px;background:rgba(0,0,0,0.085)"></div><div style="left:230.2px;top:909.6999999999999px;width:1.6000000000000227px;height:35.049999999999955px;background:rgba(0,0,0,0.1)"></div><div style="left:303.2px;top:909.6999999999999px;width:1.6000000000000227px;height:35.049999999999955px;background:rgba(0,0,0,0.1)"></div><div style="left:533.2px;top:909.6999999999999px;width:1.599999999999909px;height:35.049999999999955px;background:rgba(0,0,0,0.1)"></div><div style="left:763.2px;top:909.6999999999999px;width:1.599999999999909px;height:35.049999999999955px;background:rgba(0,0,0,0.1)"></div><div style="left:797.2px;top:909.6999999999999px;width:1.599999999999909px;height:35.049999999999955px;background:rgba(0,0,0,0.1)"></div><div style="left:1030.2px;top:909.6999999999999px;width:1.599999999999909px;height:35.049999999999955px;background:rgba(0,0,0,0.1)"></div><div style="left:1065.2px;top:909.6999999999999px;width:1.599999999999909px;height:35.049999999999955px;background:rgba(0,0,0,0.1)"></div><div style="left:109.72500000000001px;top:914.55px;height:25.35px;line-height:25.35px;font-size:19.5px;color:#424242;white-space:nowrap;transform:scaleX(0.9188);transform-origin:0 50%;">15 апр 2026</div><div style="left:239.025px;top:914.55px;height:25.35px;line-height:25.35px;font-size:19.5px;color:#424242;white-space:nowrap;transform:scaleX(0.8666);transform-origin:0 50%;">17:35</div><div style="left:311px;top:913.5999999999999px;width:136px;height:26.5px;background:#b6e0f5"></div><div style="left:316.92499999999995px;top:914.55px;height:25.35px;line-height:25.35px;font-size:19.5px;color:#35404a;white-space:nowrap;transform:scaleX(0.9661);transform-origin:0 50%;">Морозов А. С.</div><svg style="left:539.5px;top:914.0249999999999px" width="20" height="24"><path d="M9.5,2.5 c2.8,0 4.6,2 4.6,4.6 c0,2.4 -1.2,3.6 -2.6,4.4 v2.6 h4.8 a2,2 0 0 1 2,2 v4.5 h-17.6 v-4.5 a2,2 0 0 1 2,-2 h4.8 v-2.6 c-1.4,-0.8 -2.6,-2 -2.6,-4.4 c0,-2.6 1.8,-4.6 4.6,-4.6 z" fill="#c2c2c2"/></svg><div style="left:563.725px;top:914.55px;height:25.35px;line-height:25.35px;font-size:19.5px;color:#424242;white-space:nowrap;transform:scaleX(0.9450);transform-origin:0 50%;">Ким Е.</div><div style="left:807.025px;top:914.55px;height:25.35px;line-height:25.35px;font-size:19.5px;color:#424242;white-space:nowrap;transform:scaleX(0.9571);transform-origin:0 50%;">Утвержден</div><svg style="left:1037px;top:915.5249999999999px" width="24" height="24"><polyline points="2.3,9.6 9.6,17.8 21.8,4.6" fill="none" stroke="#45ae47" stroke-width="2.1"/></svg><svg style="left:1072px;top:915.5249999999999px" width="24" height="24"><polyline points="2.3,9.6 9.6,17.8 21.8,4.6" fill="none" stroke="#45ae47" stroke-width="2.1"/></svg><div style="left:799.6px;top:944.7499999999999px;width:230.60000000000002px;height:35.549999999999955px;background:#e5f8e6"></div><div style="left:102.6px;top:978.9999999999999px;width:996.8000000000001px;height:1.599999999999909px;background:rgba(0,0,0,0.085)"></div><div style="left:230.2px;top:944.7499999999999px;width:1.6000000000000227px;height:35.049999999999955px;background:rgba(0,0,0,0.1)"></div><div style="left:303.2px;top:944.7499999999999px;width:1.6000000000000227px;height:35.049999999999955px;background:rgba(0,0,0,0.1)"></div><div style="left:533.2px;top:944.7499999999999px;width:1.599999999999909px;height:35.049999999999955px;background:rgba(0,0,0,0.1)"></div><div style="left:763.2px;top:944.7499999999999px;width:1.599999999999909px;height:35.049999999999955px;background:rgba(0,0,0,0.1)"></div><div style="left:797.2px;top:944.7499999999999px;width:1.599999999999909px;height:35.049999999999955px;background:rgba(0,0,0,0.1)"></div><div style="left:1030.2px;top:944.7499999999999px;width:1.599999999999909px;height:35.049999999999955px;background:rgba(0,0,0,0.1)"></div><div style="left:1065.2px;top:944.7499999999999px;width:1.599999999999909px;height:35.049999999999955px;background:rgba(0,0,0,0.1)"></div><div style="left:109.72500000000001px;top:949.60px;height:25.35px;line-height:25.35px;font-size:19.5px;color:#424242;white-space:nowrap;transform:scaleX(0.9188);transform-origin:0 50%;">12 апр 2026</div><div style="left:239.025px;top:949.60px;height:25.35px;line-height:25.35px;font-size:19.5px;color:#424242;white-space:nowrap;transform:scaleX(0.8666);transform-origin:0 50%;">09:59</div><div style="left:311px;top:948.6499999999999px;width:136px;height:26.5px;background:#b6e0f5"></div><div style="left:316.92499999999995px;top:949.60px;height:25.35px;line-height:25.35px;font-size:19.5px;color:#35404a;white-space:nowrap;transform:scaleX(0.9661);transform-origin:0 50%;">Морозов А. С.</div><svg style="left:539.5px;top:949.0749999999998px" width="20" height="24"><path d="M9.5,2.5 c2.8,0 4.6,2 4.6,4.6 c0,2.4 -1.2,3.6 -2.6,4.4 v2.6 h4.8 a2,2 0 0 1 2,2 v4.5 h-17.6 v-4.5 a2,2 0 0 1 2,-2 h4.8 v-2.6 c-1.4,-0.8 -2.6,-2 -2.6,-4.4 c0,-2.6 1.8,-4.6 4.6,-4.6 z" fill="#c2c2c2"/></svg><div style="left:563.725px;top:949.60px;height:25.35px;line-height:25.35px;font-size:19.5px;color:#424242;white-space:nowrap;transform:scaleX(0.9450);transform-origin:0 50%;">Беккерниек А.</div><div style="left:807.025px;top:949.60px;height:25.35px;line-height:25.35px;font-size:19.5px;color:#424242;white-space:nowrap;transform:scaleX(0.9571);transform-origin:0 50%;">Утвержден</div><svg style="left:1037px;top:950.5749999999998px" width="24" height="24"><polyline points="2.3,9.6 9.6,17.8 21.8,4.6" fill="none" stroke="#45ae47" stroke-width="2.1"/></svg><svg style="left:1072px;top:950.5749999999998px" width="24" height="24"><polyline points="2.3,9.6 9.6,17.8 21.8,4.6" fill="none" stroke="#45ae47" stroke-width="2.1"/></svg><div style="left:799.6px;top:979.8px;width:230.60000000000002px;height:35.549999999999955px;background:#faf3e1"></div><div style="left:102.6px;top:1014.05px;width:996.8000000000001px;height:1.599999999999909px;background:rgba(0,0,0,0.085)"></div><div style="left:230.2px;top:979.8px;width:1.6000000000000227px;height:35.049999999999955px;background:rgba(0,0,0,0.1)"></div><div style="left:303.2px;top:979.8px;width:1.6000000000000227px;height:35.049999999999955px;background:rgba(0,0,0,0.1)"></div><div style="left:533.2px;top:979.8px;width:1.599999999999909px;height:35.049999999999955px;background:rgba(0,0,0,0.1)"></div><div style="left:763.2px;top:979.8px;width:1.599999999999909px;height:35.049999999999955px;background:rgba(0,0,0,0.1)"></div><div style="left:797.2px;top:979.8px;width:1.599999999999909px;height:35.049999999999955px;background:rgba(0,0,0,0.1)"></div><div style="left:1030.2px;top:979.8px;width:1.599999999999909px;height:35.049999999999955px;background:rgba(0,0,0,0.1)"></div><div style="left:1065.2px;top:979.8px;width:1.599999999999909px;height:35.049999999999955px;background:rgba(0,0,0,0.1)"></div><div style="left:109.72500000000001px;top:984.65px;height:25.35px;line-height:25.35px;font-size:19.5px;color:#424242;white-space:nowrap;transform:scaleX(0.9188);transform-origin:0 50%;">06 апр 2026</div><div style="left:239.025px;top:984.65px;height:25.35px;line-height:25.35px;font-size:19.5px;color:#424242;white-space:nowrap;transform:scaleX(0.8666);transform-origin:0 50%;">18:24</div><div style="left:311px;top:983.6999999999999px;width:170px;height:26.5px;background:#b1bdee"></div><div style="left:316.92499999999995px;top:984.65px;height:25.35px;line-height:25.35px;font-size:19.5px;color:#35404a;white-space:nowrap;transform:scaleX(0.9464);transform-origin:0 50%;">Виноградова И. Б.</div><svg style="left:539.5px;top:984.1249999999999px" width="20" height="24"><path d="M9.5,2.5 c2.8,0 4.6,2 4.6,4.6 c0,2.4 -1.2,3.6 -2.6,4.4 v2.6 h4.8 a2,2 0 0 1 2,2 v4.5 h-17.6 v-4.5 a2,2 0 0 1 2,-2 h4.8 v-2.6 c-1.4,-0.8 -2.6,-2 -2.6,-4.4 c0,-2.6 1.8,-4.6 4.6,-4.6 z" fill="#c2c2c2"/></svg><div style="left:563.725px;top:984.65px;height:25.35px;line-height:25.35px;font-size:19.5px;color:#424242;white-space:nowrap;transform:scaleX(0.9450);transform-origin:0 50%;">Гульнева И. М.</div><div style="left:807.025px;top:984.65px;height:25.35px;line-height:25.35px;font-size:19.5px;color:#424242;white-space:nowrap;transform:scaleX(0.9956);transform-origin:0 50%;">Ждет подписи клиники</div><svg style="left:1037px;top:985.6249999999999px" width="24" height="24"><polyline points="2.3,9.6 9.6,17.8 21.8,4.6" fill="none" stroke="#45ae47" stroke-width="2.1"/></svg><svg style="left:1072px;top:985.3249999999999px" width="24" height="24"><path d="M12,2.5 L22.5,21 H1.5 Z" fill="#f7b500" stroke="#f7b500" stroke-width="1.5" stroke-linejoin="round"/><rect x="10.9" y="8.5" width="2.3" height="7" fill="#fff"/><rect x="10.9" y="17" width="2.3" height="2.3" fill="#fff"/></svg><div style="left:799.6px;top:1014.8499999999999px;width:230.60000000000002px;height:35.549999999999955px;background:#e5f8e6"></div><div style="left:102.6px;top:1049.1px;width:996.8000000000001px;height:1.599999999999909px;background:rgba(0,0,0,0.085)"></div><div style="left:230.2px;top:1014.8499999999999px;width:1.6000000000000227px;height:35.049999999999955px;background:rgba(0,0,0,0.1)"></div><div style="left:303.2px;top:1014.8499999999999px;width:1.6000000000000227px;height:35.049999999999955px;background:rgba(0,0,0,0.1)"></div><div style="left:533.2px;top:1014.8499999999999px;width:1.599999999999909px;height:35.049999999999955px;background:rgba(0,0,0,0.1)"></div><div style="left:763.2px;top:1014.8499999999999px;width:1.599999999999909px;height:35.049999999999955px;background:rgba(0,0,0,0.1)"></div><div style="left:797.2px;top:1014.8499999999999px;width:1.599999999999909px;height:35.049999999999955px;background:rgba(0,0,0,0.1)"></div><div style="left:1030.2px;top:1014.8499999999999px;width:1.599999999999909px;height:35.049999999999955px;background:rgba(0,0,0,0.1)"></div><div style="left:1065.2px;top:1014.8499999999999px;width:1.599999999999909px;height:35.049999999999955px;background:rgba(0,0,0,0.1)"></div><div style="left:109.72500000000001px;top:1019.70px;height:25.35px;line-height:25.35px;font-size:19.5px;color:#424242;white-space:nowrap;transform:scaleX(0.9188);transform-origin:0 50%;">06 апр 2026</div><div style="left:239.025px;top:1019.70px;height:25.35px;line-height:25.35px;font-size:19.5px;color:#424242;white-space:nowrap;transform:scaleX(0.8666);transform-origin:0 50%;">14:18</div><div style="left:311px;top:1018.7499999999999px;width:170px;height:26.500000000000114px;background:#b1bdee"></div><div style="left:316.92499999999995px;top:1019.70px;height:25.35px;line-height:25.35px;font-size:19.5px;color:#35404a;white-space:nowrap;transform:scaleX(0.9464);transform-origin:0 50%;">Виноградова И. Б.</div><svg style="left:539.5px;top:1019.175px" width="20" height="24"><path d="M9.5,2.5 c2.8,0 4.6,2 4.6,4.6 c0,2.4 -1.2,3.6 -2.6,4.4 v2.6 h4.8 a2,2 0 0 1 2,2 v4.5 h-17.6 v-4.5 a2,2 0 0 1 2,-2 h4.8 v-2.6 c-1.4,-0.8 -2.6,-2 -2.6,-4.4 c0,-2.6 1.8,-4.6 4.6,-4.6 z" fill="#c2c2c2"/></svg><div style="left:563.725px;top:1019.70px;height:25.35px;line-height:25.35px;font-size:19.5px;color:#424242;white-space:nowrap;transform:scaleX(0.9450);transform-origin:0 50%;">Григорян Д. В.</div><div style="left:807.025px;top:1019.70px;height:25.35px;line-height:25.35px;font-size:19.5px;color:#424242;white-space:nowrap;transform:scaleX(0.9571);transform-origin:0 50%;">Утвержден</div><svg style="left:1037px;top:1020.675px" width="24" height="24"><polyline points="2.3,9.6 9.6,17.8 21.8,4.6" fill="none" stroke="#45ae47" stroke-width="2.1"/></svg><svg style="left:1072px;top:1020.675px" width="24" height="24"><polyline points="2.3,9.6 9.6,17.8 21.8,4.6" fill="none" stroke="#45ae47" stroke-width="2.1"/></svg><div style="left:799.6px;top:1049.8999999999999px;width:230.60000000000002px;height:35.549999999999955px;background:#e5f8e6"></div><div style="left:102.6px;top:1084.1499999999999px;width:996.8000000000001px;height:1.599999999999909px;background:rgba(0,0,0,0.085)"></div><div style="left:230.2px;top:1049.8999999999999px;width:1.6000000000000227px;height:35.049999999999955px;background:rgba(0,0,0,0.1)"></div><div style="left:303.2px;top:1049.8999999999999px;width:1.6000000000000227px;height:35.049999999999955px;background:rgba(0,0,0,0.1)"></div><div style="left:533.2px;top:1049.8999999999999px;width:1.599999999999909px;height:35.049999999999955px;background:rgba(0,0,0,0.1)"></div><div style="left:763.2px;top:1049.8999999999999px;width:1.599999999999909px;height:35.049999999999955px;background:rgba(0,0,0,0.1)"></div><div style="left:797.2px;top:1049.8999999999999px;width:1.599999999999909px;height:35.049999999999955px;background:rgba(0,0,0,0.1)"></div><div style="left:1030.2px;top:1049.8999999999999px;width:1.599999999999909px;height:35.049999999999955px;background:rgba(0,0,0,0.1)"></div><div style="left:1065.2px;top:1049.8999999999999px;width:1.599999999999909px;height:35.049999999999955px;background:rgba(0,0,0,0.1)"></div><div style="left:109.72500000000001px;top:1054.75px;height:25.35px;line-height:25.35px;font-size:19.5px;color:#424242;white-space:nowrap;transform:scaleX(0.9188);transform-origin:0 50%;">05 апр 2026</div><div style="left:239.025px;top:1054.75px;height:25.35px;line-height:25.35px;font-size:19.5px;color:#424242;white-space:nowrap;transform:scaleX(0.8666);transform-origin:0 50%;">12:00</div><div style="left:311px;top:1053.8px;width:148px;height:26.5px;background:#f2a7ab"></div><div style="left:316.92499999999995px;top:1054.75px;height:25.35px;line-height:25.35px;font-size:19.5px;color:#35404a;white-space:nowrap;transform:scaleX(0.9145);transform-origin:0 50%;">Дмитриева Е. В.</div><svg style="left:539.5px;top:1054.225px" width="20" height="24"><path d="M9.5,2.5 c2.8,0 4.6,2 4.6,4.6 c0,2.4 -1.2,3.6 -2.6,4.4 v2.6 h4.8 a2,2 0 0 1 2,2 v4.5 h-17.6 v-4.5 a2,2 0 0 1 2,-2 h4.8 v-2.6 c-1.4,-0.8 -2.6,-2 -2.6,-4.4 c0,-2.6 1.8,-4.6 4.6,-4.6 z" fill="#ffb300"/></svg><div style="left:563.725px;top:1054.75px;height:25.35px;line-height:25.35px;font-size:19.5px;color:#424242;white-space:nowrap;transform:scaleX(0.9450);transform-origin:0 50%;">Малкина К. А.</div><div style="left:807.025px;top:1054.75px;height:25.35px;line-height:25.35px;font-size:19.5px;color:#424242;white-space:nowrap;transform:scaleX(0.9571);transform-origin:0 50%;">Утвержден</div><svg style="left:1037px;top:1055.725px" width="24" height="24"><polyline points="2.3,9.6 9.6,17.8 21.8,4.6" fill="none" stroke="#45ae47" stroke-width="2.1"/></svg><svg style="left:1072px;top:1055.725px" width="24" height="24"><polyline points="2.3,9.6 9.6,17.8 21.8,4.6" fill="none" stroke="#45ae47" stroke-width="2.1"/></svg><div style="left:795px;top:204.8px;width:271.5999999999999px;height:891.7px;border:2.6px solid #b2dc1e;border-radius:5px;box-shadow:0 0 10px 2px rgba(180,230,60,0.35), inset 0 0 8px rgba(200,240,80,0.25)"></div><div style="left:1114px;top:143px;width:1942px;height:1525px;background:#fff;border:1.6px solid #c3c3c3"></div><div style="left:1115.6px;top:144.6px;width:1938.8000000000002px;height:47.900000000000006px;background:#f3f3f3;border-bottom:1.6px solid #e2e2e2"></div><div style="left:1125.05px;top:155.65px;height:24.70px;line-height:24.70px;font-size:19px;color:#9b9b9b;white-space:nowrap;transform:scaleX(0.9746);transform-origin:0 50%;">Амбулаторная карта</div><svg style="left:1326.5px;top:154.8px" width="20" height="24"><path d="M9.5,2.5 c2.8,0 4.6,2 4.6,4.6 c0,2.4 -1.2,3.6 -2.6,4.4 v2.6 h4.8 a2,2 0 0 1 2,2 v4.5 h-17.6 v-4.5 a2,2 0 0 1 2,-2 h4.8 v-2.6 c-1.4,-0.8 -2.6,-2 -2.6,-4.4 c0,-2.6 1.8,-4.6 4.6,-4.6 z" fill="#c6c6c6"/></svg><div style="left:1352.025px;top:155.32px;height:25.35px;line-height:25.35px;font-size:19.5px;color:#333;white-space:nowrap;transform:scaleX(1.0107);transform-origin:0 50%;">Логинова М.</div><svg style="left:1484px;top:155px" width="26" height="26"><rect x="3" y="4" width="19" height="19" fill="none" stroke="#b0b0b0" stroke-width="1.8"/><rect x="7" y="1.5" width="2" height="4" fill="#b0b0b0"/><rect x="16" y="1.5" width="2" height="4" fill="#b0b0b0"/><text x="12.5" y="19" font-size="10" text-anchor="middle" fill="#b0b0b0" font-family="Liberation Sans">17</text></svg><div style="left:1513.025px;top:155.32px;height:25.35px;line-height:25.35px;font-size:19.5px;color:#333;white-space:nowrap;transform:scaleX(0.9188);transform-origin:0 50%;">15 апр 2026</div><div style="left:1635px;top:153px;width:153px;height:27px;background:#b2e8d8"></div><div style="left:1641.025px;top:154.32px;height:25.35px;line-height:25.35px;font-size:19.5px;color:#35404a;white-space:nowrap;transform:scaleX(0.9592);transform-origin:0 50%;">Верстакова А. Г.</div><div style="left:1115.6px;top:242px;width:1938.8000000000002px;height:1.5999999999999943px;background:#e3e3e3"></div><div style="left:1123px;top:196.5px;width:217px;height:47.099999999999994px;background:#fff;border:1.6px solid #dedede;border-bottom:none;border-radius:3px 3px 0 0"></div><div style="left:1138.025px;top:209.32px;height:25.35px;line-height:25.35px;font-size:19.5px;color:#333;white-space:nowrap;transform:scaleX(0.9900);transform-origin:0 50%;">История болезни</div><svg style="left:1306px;top:207px" width="30" height="28"><rect x="3" y="3" width="14" height="20" fill="none" stroke="#6c6c6c" stroke-width="2"/><rect x="6" y="7" width="8" height="2" fill="#6c6c6c"/><rect x="6" y="12" width="4" height="2" fill="#6c6c6c"/><rect x="6" y="17" width="3" height="2" fill="#6c6c6c"/><circle cx="20" cy="19" r="5.5" fill="#fff" stroke="#6c6c6c" stroke-width="3"/><circle cx="20" cy="19" r="1.5" fill="#6c6c6c"/></svg><div style="left:1125.115px;top:260.10px;height:23.01px;line-height:23.01px;font-size:17.7px;color:#9a9a9a;white-space:nowrap;transform:scaleX(1.0503);transform-origin:0 50%;">Жалобы</div><div style="left:1154.7px;top:288.00px;height:28.60px;line-height:28.60px;font-size:22px;color:#474747;white-space:nowrap;transform:scaleX(0.9958);transform-origin:0 50%;">32 : На косметический дефект в виде пигментированного пятна. На боль от термических и химических раздражителей, проходящую сразу после устранения причины. Явка с целью</div><div style="left:1154.7px;top:318.90px;height:28.60px;line-height:28.60px;font-size:22px;color:#474747;white-space:nowrap;transform:scaleX(0.9922);transform-origin:0 50%;">профессионального осмотра врача-стоматолога.</div><div style="left:1125.115px;top:358.80px;height:23.01px;line-height:23.01px;font-size:17.7px;color:#9a9a9a;white-space:nowrap;transform:scaleX(1.0520);transform-origin:0 50%;">Анамнез</div><div style="left:1154.7px;top:387.50px;height:28.60px;line-height:28.60px;font-size:22px;color:#474747;white-space:nowrap;transform:scaleX(0.9899);transform-origin:0 50%;">32 : Зуб ранее не лечен</div><div style="left:1125.115px;top:427.00px;height:23.01px;line-height:23.01px;font-size:17.7px;color:#9a9a9a;white-space:nowrap;transform:scaleX(1.0858);transform-origin:0 50%;">Объективно</div><div style="left:1154.7px;top:455.30px;height:28.60px;line-height:28.60px;font-size:22px;color:#474747;white-space:nowrap;transform:scaleX(0.9963);transform-origin:0 50%;">32 : На оккл., дист., мез., лат. поверхности зуба(ов) пигментированное пятно, гладкое при зондировании. Реакция на термические и химические раздражители - безболезненна.</div><div style="left:1154.7px;top:485.90px;height:28.60px;line-height:28.60px;font-size:22px;color:#474747;white-space:nowrap;transform:scaleX(0.9924);transform-origin:0 50%;">Перкуссия - безболезненна.</div><div style="left:1125.115px;top:524.50px;height:23.01px;line-height:23.01px;font-size:17.7px;color:#9a9a9a;white-space:nowrap;transform:scaleX(1.1142);transform-origin:0 50%;">Диагноз</div><svg style="left:1207px;top:523.5px" width="25" height="26"><rect x="0" y="0" width="24.5" height="25.5" fill="#3b58ad"/><g fill="#eef1f8"><path d="M12.25,6 l1.6,2 v5 l-1.6,2 l-1.6,-2 v-5 z"/><path d="M3,6 l3,1 l2,3 l2,1 v4 l-2,1 l-3,-1 l-1,-3 z"/><path d="M21.5,6 l-3,1 l-2,3 l-2,1 v4 l2,1 l3,-1 l1,-3 z"/><rect x="9" y="3" width="2" height="3"/><rect x="13.5" y="3" width="2" height="3"/><path d="M10,17 h4.5 l-1,2 v2 l1.5,1.5 h-5.5 l1.5,-1.5 v-2 z"/></g></svg><div style="left:1154.7px;top:553.20px;height:28.60px;line-height:28.60px;font-size:22px;color:#474747;white-space:nowrap;transform:scaleX(0.9736);transform-origin:0 50%;">32 : K02.0 Кариес эмали</div><div style="left:1115.6px;top:1619px;width:1938.8000000000002px;height:47.40000000000009px;background:#f9e7e7;border-top:1.6px solid #dadada"></div><div style="left:1125.6px;top:1634.30px;height:23.40px;line-height:23.40px;font-size:18px;color:#a5a5a5;white-space:nowrap;transform:scaleX(0.9385);transform-origin:0 50%;">Статус</div><div style="left:1190.025px;top:1633.33px;height:25.35px;line-height:25.35px;font-size:19.5px;color:#333;white-space:nowrap;transform:scaleX(0.9685);transform-origin:0 50%;">На доработке</div><div style="left:2641px;top:1631px;width:143px;height:32px;background:#dedede;border:1.6px solid #cfcfcf"></div><div style="left:2654.05px;top:1634.65px;height:24.70px;line-height:24.70px;font-size:19px;color:#b9b9b9;white-space:nowrap;transform:scaleX(0.9779);transform-origin:0 50%;">На доработку</div><div style="left:2799px;top:1631px;width:225px;height:32px;background:#e6dede;border:2px solid #f28d8d"></div><div style="left:2810.05px;top:1634.65px;height:24.70px;line-height:24.70px;font-size:19px;color:#b9b9b9;white-space:nowrap;transform:scaleX(0.9752);transform-origin:0 50%;">Утвердить и подписать</div><div style="left:3025px;top:1631px;width:25px;height:32px;background:#e0e0e0;border:1.6px solid #cfcfcf"></div><svg style="left:3025px;top:1631px" width="25" height="32"><polyline points="8,12 12.5,16.5 17,12" fill="none" stroke="#6a6a6a" stroke-width="2"/></svg><div style="left:1145.5px;top:637px;width:802.5px;height:188.5px;background:#fff;border:1.5px solid #b9c8da;border-radius:17px;box-shadow:0 6px 18px rgba(40,60,90,0.10)"></div><div style="left:1179.8999999999999px;top:663.70px;height:44.20px;line-height:44.20px;font-size:34px;color:#4e5d6e;white-space:nowrap;transform:scaleX(1.1302);transform-origin:0 50%;">Возможность контролировать статусы</div><div style="left:1179.8999999999999px;top:710.40px;height:44.20px;line-height:44.20px;font-size:34px;color:#4e5d6e;white-space:nowrap;transform:scaleX(1.1310);transform-origin:0 50%;">и подписывать все случаи обслуживания</div><div style="left:1179.8999999999999px;top:757.00px;height:44.20px;line-height:44.20px;font-size:34px;color:#4e5d6e;white-space:nowrap;transform:scaleX(1.1359);transform-origin:0 50%;">в одном окне</div><div style="left:2063px;top:1211px;width:691px;height:188.5px;background:#fff;border:1.5px solid #b9c8da;border-radius:17px;box-shadow:0 6px 18px rgba(40,60,90,0.10)"></div><div style="left:2096.3px;top:1238.20px;height:44.20px;line-height:44.20px;font-size:34px;color:#4e5d6e;white-space:nowrap;transform:scaleX(1.1199);transform-origin:0 50%;">IDENT страхует клинику от ошибок,</div><div style="left:2096.3px;top:1285.20px;height:44.20px;line-height:44.20px;font-size:34px;color:#4e5d6e;white-space:nowrap;transform:scaleX(1.1306);transform-origin:0 50%;">подсказывая, что исправить перед</div><div style="left:2096.3px;top:1331.70px;height:44.20px;line-height:44.20px;font-size:34px;color:#4e5d6e;white-space:nowrap;transform:scaleX(1.1585);transform-origin:0 50%;">отправкой</div><div style="left:2285.5px;top:1434.3px;width:772.5px;height:205.10000000000014px;border:3.4px solid #b2dd1c;border-radius:5px;box-shadow:0 0 10px 2px rgba(180,230,60,0.35)"></div><div style="left:2293px;top:1439px;width:761px;height:195px;background:#fdfdf5;border:3.2px solid #e05b28"></div><div style="left:2304.15px;top:1456.45px;height:22.10px;line-height:22.10px;font-size:17px;color:#a9a9a9;white-space:nowrap;transform:scaleX(1.3104);transform-origin:0 50%;">Для отправки в ЕГИСЗ нужно исправить ошибки:</div><div style="left:2323.5px;top:1499.1000000000001px;width:5.5px;height:5.5px;background:#3a3a3a"></div><div style="left:2344.765px;top:1485.85px;height:32.11px;line-height:32.11px;font-size:24.7px;color:#444444;white-space:nowrap;transform:scaleX(1.0633);transform-origin:0 50%;">Случай обслуживания не привязан к счету</div><div style="left:2323.5px;top:1532.2px;width:5.5px;height:5.5px;background:#3a3a3a"></div><div style="left:2344.765px;top:1518.94px;height:32.11px;line-height:32.11px;font-size:24.7px;color:#444444;white-space:nowrap;transform:scaleX(1.0504);transform-origin:0 50%;">Не заполнен СНИЛС пациента</div><div style="left:2323.5px;top:1567.8px;width:5.5px;height:5.5px;background:#3a3a3a"></div><div style="left:2344.765px;top:1554.54px;height:32.11px;line-height:32.11px;font-size:24.7px;color:#444444;white-space:nowrap;transform:scaleX(1.0465);transform-origin:0 50%;">Не заполнен СНИЛС сотрудника Верстакова А. Г.</div><div style="left:2323.5px;top:1604.2px;width:5.5px;height:5.5px;background:#3a3a3a"></div><div style="left:2344.765px;top:1590.94px;height:32.11px;line-height:32.11px;font-size:24.7px;color:#444444;white-space:nowrap;transform:scaleX(1.0488);transform-origin:0 50%;">Не заполнены данные ФРМР сотрудника Верстакова А. Г.</div><svg style="left:0;top:0;filter:drop-shadow(0 2px 2px rgba(0,0,0,0.13))" width="3072" height="1689"><path d="M1302,834 V889 a8,8 0 0 1 -8,8 H1066" fill="none" stroke="#2b94f0" stroke-width="4.4"/><polyline points="1079,883 1065,897 1079,911" fill="none" stroke="#2b94f0" stroke-width="4.4" stroke-linecap="round" stroke-linejoin="round"/><circle cx="1302" cy="827" r="7" fill="#fff" stroke="#2b94f0" stroke-width="2.8"/><path d="M2187.5,1406 V1556 a8,8 0 0 0 8,8 H2287" fill="none" stroke="#2b94f0" stroke-width="4.4"/><polyline points="2274,1550 2288,1564 2274,1578" fill="none" stroke="#2b94f0" stroke-width="4.4" stroke-linecap="round" stroke-linejoin="round"/><circle cx="2187.5" cy="1399" r="7" fill="#fff" stroke="#2b94f0" stroke-width="2.8"/></svg>
</body></html>
